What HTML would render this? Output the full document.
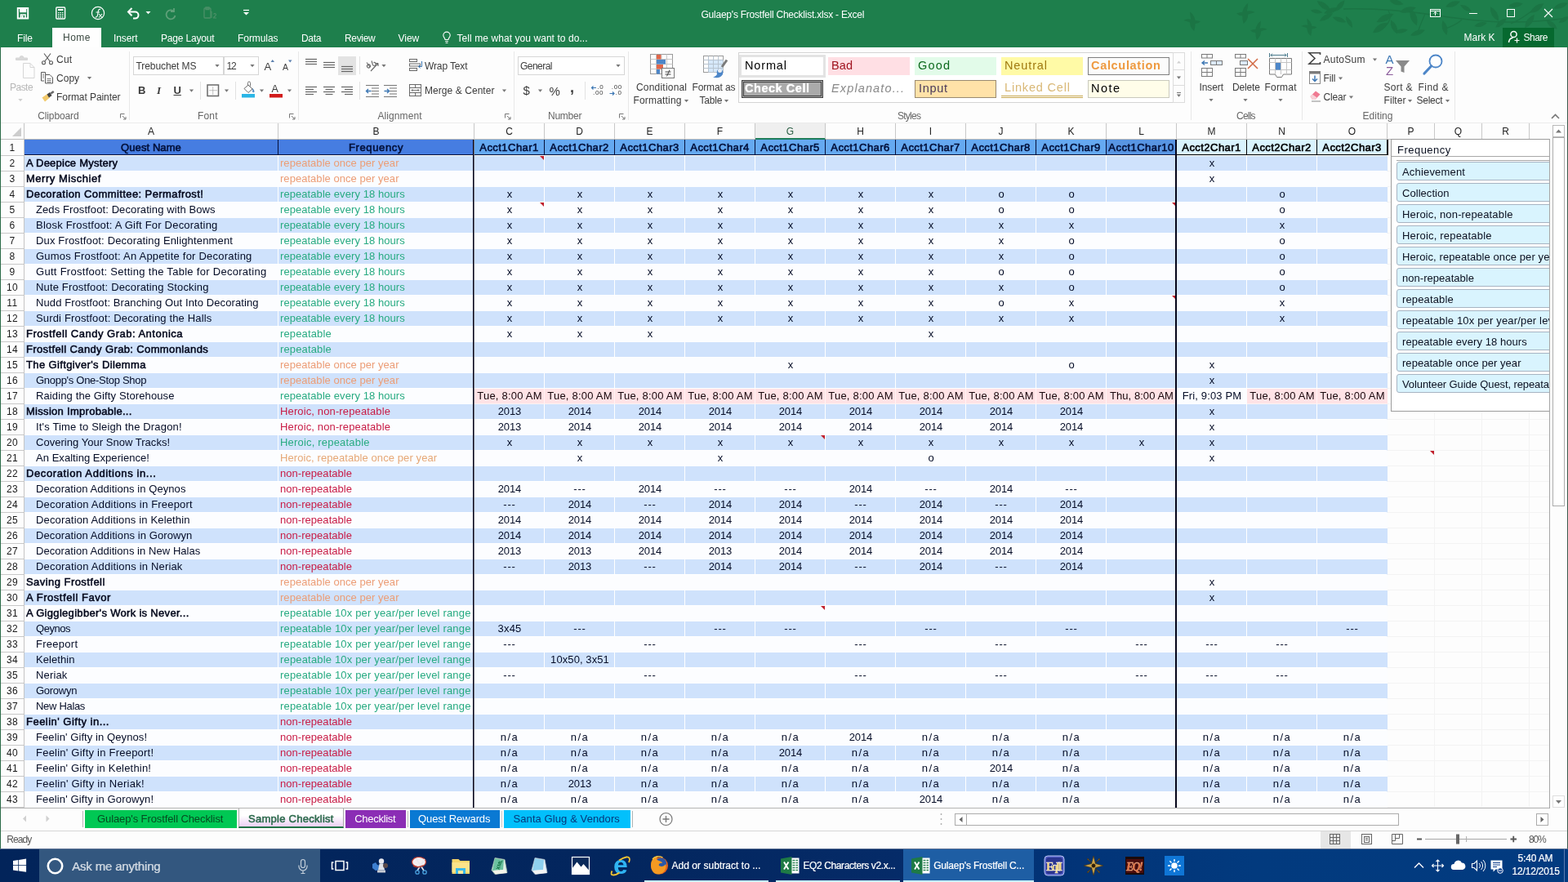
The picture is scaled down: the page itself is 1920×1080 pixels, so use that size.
<!DOCTYPE html><html><head><meta charset="utf-8"><title>Gulaep's Frostfell Checklist.xlsx - Excel</title><style>

*{box-sizing:border-box;margin:0;padding:0}
html,body{width:1920px;height:1080px;overflow:hidden;background:#fff}
body{font-family:"Liberation Sans",sans-serif;font-size:12px;color:#444;position:relative}
.abs,#grid div,#grid span,#grid b{position:absolute}
svg{position:absolute;overflow:visible}
/* ---------- grid ---------- */
#grid{position:absolute;left:0;top:0;width:1920px;height:1080px;font-size:13px;color:#040c26;white-space:nowrap}
#gridbg{position:absolute;left:1px;top:151px;width:1897px;height:839px;background:#fdfdfd;border-bottom:1px solid #b4b4b4}
.gh{left:1699px;width:198px;height:1px;background:#f3f3f3}
.gv{top:171px;width:1px;height:818px;background:#f3f3f3}
.corner{left:1px;top:151px;width:29px;height:20px;border-right:1px solid #c4c4c4;border-bottom:1px solid #bdbdbd;background:#fdfdfd}
.corner i{position:absolute;right:3px;bottom:3px;width:0;height:0;border-left:11px solid transparent;border-bottom:11px solid #cdcdcd}
.ch{top:151px;height:20px;line-height:21px;text-align:center;color:#222;border-right:1px solid #c8c8c8;border-bottom:1px solid #b9b9b9;background:#fdfdfd;font-size:12px}
.ch.sel{background:#efefef;color:#2b5e44;border-bottom:2px solid #1f7d5a}
.rh{left:1px;width:29px;height:20px;line-height:20px;text-align:center;letter-spacing:.4px;color:#1a1a1a;border-right:1px solid #c4c4c4;border-bottom:1px solid #c8c8c8;font-size:12px}
.r{left:0;width:1699px;height:19px;line-height:18px}
.r span,.r b{top:0;height:19px;overflow:hidden;border-right:1px solid #fff;border-bottom:1px solid #fff}
.r.wh span{background:#fcfdff;border-color:#fcfdff}
.r.bl span{background:#cfe2fc}
.r.bl span.lc{border-right-color:#cfe2fc}
.r.wh span.pk.lc{border-right-color:#ffe3e6}
.a{left:30px;width:311px}
.a.b{font-weight:normal;-webkit-text-stroke:.5px #02061a;padding-left:2px;color:#02061a}
.a.i{padding-left:14px}
.f{left:341px;width:240px;padding-left:2px}
.c{width:86px;text-align:center;padding-left:1px}
.o{color:#ec9d76}.t{color:#e6a877}.g{color:#28ab82}.rd{color:#c81c46}
.r.wh span.pk,.pk{background:#ffe3e6;color:#16040a;border-color:#fff3f4}
.r.hd{height:20px}
.hd b{font-weight:normal;-webkit-text-stroke:.6px #03103a;top:0;height:19px;line-height:20px;text-align:center;color:#03103a;border-right:1px solid #06103a;border-bottom:1px solid #06103a;overflow:hidden}
.h1{background:#467de1}
.h2{width:86px;background:#65a9f1}
.h2l{background:#5895e3}
.hd b.h3{width:86px;background:#d9f3fe;color:#000;-webkit-text-stroke-color:#000;border-color:#000}
.hd b.h3.last{width:87px;border-right-width:2px}
.cm{width:0;height:0;border-left:5px solid transparent;border-top:5px solid #c0202c}
.vl{top:171px;width:2px;height:818px;background:#05051a}


#tb{position:absolute;left:0;top:0;width:1920px;height:58px;background:#1e7f4c;color:#fff}
.x{position:absolute;white-space:pre}
#tb .x{color:#fff}
#hometab{position:absolute;left:64px;top:34px;width:60px;height:24px;background:#fefefe}
#share{position:absolute;left:1840px;top:34px;width:63px;height:24px;background:#06692f}
#lb{position:absolute;left:0;top:58px;width:1px;height:982px;background:#2b6b47}
#rbd{position:absolute;left:1919px;top:58px;width:1px;height:982px;background:#3b5a4c}


#rb{position:absolute;left:1px;top:58px;width:1918px;height:93px;background:#fdfdfd;border-bottom:1px solid #ececec}
#rb .x,.rbt{color:#3b3b3b}
.gs{position:absolute;top:63px;width:1px;height:84px;background:#e8e8e8}
.ss{position:absolute;width:1px;height:22px;background:#e2e2e2}
.box{position:absolute;border:1px solid #d6d6d6;background:#fff}
.sty{position:absolute;height:22px;width:100px;font-size:14.5px;line-height:20px;padding-left:4px;white-space:nowrap;overflow:hidden;color:#000}


#sl{position:absolute;left:1703px;top:170px;width:194px;height:334px;border:1px solid #9c9c9c;border-right:0;background:#fff;overflow:hidden;font-size:13px;color:#0a1020;white-space:nowrap}
#sl .hd1{position:absolute;left:7px;top:3px;height:18px;line-height:20px}
#sl .l1{position:absolute;left:0;top:20px;width:195px;height:1px;background:#a8a8a8}
#sl .l2{position:absolute;left:6px;top:25px;width:190px;height:1px;background:#a8a8a8}
#sl .it{position:absolute;left:6px;width:200px;height:23px;line-height:23px;padding-left:6px;border:1px solid #a7b4c2;border-radius:3px;background:#d9f4fe}


#vs{position:absolute;left:1898px;top:151px;width:21px;height:839px;background:#fdfdfd}
.sb{position:absolute;border:1px solid #ababab;background:#fff}
#tabs{position:absolute;left:1px;top:990px;width:1918px;height:27px;background:#fdfdfd}
#st{position:absolute;left:1px;top:1017px;width:1918px;height:23px;background:#fdfdfd;border-top:1px solid #d6d6d6}
.tab{position:absolute;top:992px;height:22px;line-height:21px;font-size:13px;text-align:center;white-space:nowrap}
.tsep{position:absolute;top:993px;width:1px;height:20px;background:#b5b5b5}


#tk{position:absolute;left:0;top:1040px;width:1920px;height:40px;background:linear-gradient(90deg,#02245a 0,#03265e 40%,#052b68 57%,#023377 67%,#023a7e 80%,#023b80 100%);overflow:hidden}
#tk .x{color:#fff;-webkit-text-stroke:.2px #fff}
#tkl{position:absolute;left:0;top:1039px;width:1920px;height:1px;background:#5b6f92}
#srch{position:absolute;left:48px;top:0;width:344px;height:40px;background:#33577f}
#act{position:absolute;left:1106px;top:0;width:160px;height:40px;background:#1e5ea4}
.ul{position:absolute;top:38px;height:2px;background:#c9f1fa}

#w{position:absolute;left:0;top:0;width:1920px;height:1080px;overflow:hidden;will-change:transform}
</style></head><body><div id="w">
<div id="gridbg"></div>
<div id="grid">
<div class="gh" style="top:190px"></div>
<div class="gh" style="top:209px"></div>
<div class="gh" style="top:228px"></div>
<div class="gh" style="top:247px"></div>
<div class="gh" style="top:266px"></div>
<div class="gh" style="top:285px"></div>
<div class="gh" style="top:304px"></div>
<div class="gh" style="top:323px"></div>
<div class="gh" style="top:342px"></div>
<div class="gh" style="top:361px"></div>
<div class="gh" style="top:380px"></div>
<div class="gh" style="top:399px"></div>
<div class="gh" style="top:418px"></div>
<div class="gh" style="top:437px"></div>
<div class="gh" style="top:456px"></div>
<div class="gh" style="top:475px"></div>
<div class="gh" style="top:494px"></div>
<div class="gh" style="top:513px"></div>
<div class="gh" style="top:532px"></div>
<div class="gh" style="top:551px"></div>
<div class="gh" style="top:570px"></div>
<div class="gh" style="top:589px"></div>
<div class="gh" style="top:608px"></div>
<div class="gh" style="top:627px"></div>
<div class="gh" style="top:646px"></div>
<div class="gh" style="top:665px"></div>
<div class="gh" style="top:684px"></div>
<div class="gh" style="top:703px"></div>
<div class="gh" style="top:722px"></div>
<div class="gh" style="top:741px"></div>
<div class="gh" style="top:760px"></div>
<div class="gh" style="top:779px"></div>
<div class="gh" style="top:798px"></div>
<div class="gh" style="top:817px"></div>
<div class="gh" style="top:836px"></div>
<div class="gh" style="top:855px"></div>
<div class="gh" style="top:874px"></div>
<div class="gh" style="top:893px"></div>
<div class="gh" style="top:912px"></div>
<div class="gh" style="top:931px"></div>
<div class="gh" style="top:950px"></div>
<div class="gh" style="top:969px"></div>
<div class="gh" style="top:988px"></div>
<div class="gv" style="left:1756px"></div>
<div class="gv" style="left:1814px"></div>
<div class="gv" style="left:1872px"></div>
<div class="corner"><i></i></div>
<div class="ch" style="left:30px;width:311px">A</div>
<div class="ch" style="left:341px;width:240px">B</div>
<div class="ch" style="left:581px;width:86px">C</div>
<div class="ch" style="left:667px;width:86px">D</div>
<div class="ch" style="left:753px;width:86px">E</div>
<div class="ch" style="left:839px;width:86px">F</div>
<div class="ch sel" style="left:925px;width:86px">G</div>
<div class="ch" style="left:1011px;width:86px">H</div>
<div class="ch" style="left:1097px;width:86px">I</div>
<div class="ch" style="left:1183px;width:86px">J</div>
<div class="ch" style="left:1269px;width:86px">K</div>
<div class="ch" style="left:1355px;width:86px">L</div>
<div class="ch" style="left:1441px;width:86px">M</div>
<div class="ch" style="left:1527px;width:86px">N</div>
<div class="ch" style="left:1613px;width:86px">O</div>
<div class="ch" style="left:1699px;width:58px">P</div>
<div class="ch" style="left:1757px;width:58px">Q</div>
<div class="ch" style="left:1815px;width:58px">R</div>
<div class="ch" style="left:1873px;width:25px;border-right:0"></div>
<div class="rh" style="top:171px">1</div>
<div class="rh" style="top:190px">2</div>
<div class="rh" style="top:209px">3</div>
<div class="rh" style="top:228px">4</div>
<div class="rh" style="top:247px">5</div>
<div class="rh" style="top:266px">6</div>
<div class="rh" style="top:285px">7</div>
<div class="rh" style="top:304px">8</div>
<div class="rh" style="top:323px">9</div>
<div class="rh" style="top:342px">10</div>
<div class="rh" style="top:361px">11</div>
<div class="rh" style="top:380px">12</div>
<div class="rh" style="top:399px">13</div>
<div class="rh" style="top:418px">14</div>
<div class="rh" style="top:437px">15</div>
<div class="rh" style="top:456px">16</div>
<div class="rh" style="top:475px">17</div>
<div class="rh" style="top:494px">18</div>
<div class="rh" style="top:513px">19</div>
<div class="rh" style="top:532px">20</div>
<div class="rh" style="top:551px">21</div>
<div class="rh" style="top:570px">22</div>
<div class="rh" style="top:589px">23</div>
<div class="rh" style="top:608px">24</div>
<div class="rh" style="top:627px">25</div>
<div class="rh" style="top:646px">26</div>
<div class="rh" style="top:665px">27</div>
<div class="rh" style="top:684px">28</div>
<div class="rh" style="top:703px">29</div>
<div class="rh" style="top:722px">30</div>
<div class="rh" style="top:741px">31</div>
<div class="rh" style="top:760px">32</div>
<div class="rh" style="top:779px">33</div>
<div class="rh" style="top:798px">34</div>
<div class="rh" style="top:817px">35</div>
<div class="rh" style="top:836px">36</div>
<div class="rh" style="top:855px">37</div>
<div class="rh" style="top:874px">38</div>
<div class="rh" style="top:893px">39</div>
<div class="rh" style="top:912px">40</div>
<div class="rh" style="top:931px">41</div>
<div class="rh" style="top:950px">42</div>
<div class="rh" style="top:969px">43</div>
<div class="r hd" style="top:171px">
<b class="h1" style="left:30px;width:311px;letter-spacing:0.08px">Quest Name</b><b class="h1" style="left:341px;width:240px;letter-spacing:0.62px">Frequency</b>
<b class="h2" style="left:581px;letter-spacing:0.45px">Acct1Char1</b>
<b class="h2" style="left:667px;letter-spacing:0.45px">Acct1Char2</b>
<b class="h2" style="left:753px;letter-spacing:0.45px">Acct1Char3</b>
<b class="h2" style="left:839px;letter-spacing:0.45px">Acct1Char4</b>
<b class="h2" style="left:925px;letter-spacing:0.45px">Acct1Char5</b>
<b class="h2" style="left:1011px;letter-spacing:0.45px">Acct1Char6</b>
<b class="h2" style="left:1097px;letter-spacing:0.45px">Acct1Char7</b>
<b class="h2" style="left:1183px;letter-spacing:0.45px">Acct1Char8</b>
<b class="h2" style="left:1269px;letter-spacing:0.45px">Acct1Char9</b>
<b class="h2 h2l" style="left:1355px;letter-spacing:0.48px">Acct1Char10</b>
<b class="h3" style="left:1441px;letter-spacing:0.45px">Acct2Char1</b>
<b class="h3" style="left:1527px;letter-spacing:0.45px">Acct2Char2</b>
<b class="h3 last" style="left:1613px;letter-spacing:0.45px">Acct2Char3</b>
</div>
<div class="r bl" style="top:191px">
<span class="a b" style="letter-spacing:0.23px">A Deepice Mystery</span><span class="f o" style="letter-spacing:0.04px">repeatable once per year</span>
<span class="c" style="left:581px"></span>
<span class="c" style="left:667px"></span>
<span class="c" style="left:753px"></span>
<span class="c" style="left:839px"></span>
<span class="c" style="left:925px"></span>
<span class="c" style="left:1011px"></span>
<span class="c" style="left:1097px"></span>
<span class="c" style="left:1183px"></span>
<span class="c" style="left:1269px"></span>
<span class="c" style="left:1355px"></span>
<span class="c" style="left:1441px">x</span>
<span class="c" style="left:1527px"></span>
<span class="c lc" style="left:1613px"></span>
</div>
<div class="r wh" style="top:210px">
<span class="a b" style="letter-spacing:0.53px">Merry Mischief</span><span class="f o" style="letter-spacing:0.04px">repeatable once per year</span>
<span class="c" style="left:581px"></span>
<span class="c" style="left:667px"></span>
<span class="c" style="left:753px"></span>
<span class="c" style="left:839px"></span>
<span class="c" style="left:925px"></span>
<span class="c" style="left:1011px"></span>
<span class="c" style="left:1097px"></span>
<span class="c" style="left:1183px"></span>
<span class="c" style="left:1269px"></span>
<span class="c" style="left:1355px"></span>
<span class="c" style="left:1441px">x</span>
<span class="c" style="left:1527px"></span>
<span class="c lc" style="left:1613px"></span>
</div>
<div class="r bl" style="top:229px">
<span class="a b" style="letter-spacing:0.41px">Decoration Committee: Permafrost!</span><span class="f g" style="letter-spacing:0.07px">repeatable every 18 hours</span>
<span class="c" style="left:581px">x</span>
<span class="c" style="left:667px">x</span>
<span class="c" style="left:753px">x</span>
<span class="c" style="left:839px">x</span>
<span class="c" style="left:925px">x</span>
<span class="c" style="left:1011px">x</span>
<span class="c" style="left:1097px">x</span>
<span class="c" style="left:1183px">o</span>
<span class="c" style="left:1269px">o</span>
<span class="c" style="left:1355px"></span>
<span class="c" style="left:1441px"></span>
<span class="c" style="left:1527px">o</span>
<span class="c lc" style="left:1613px"></span>
</div>
<div class="r wh" style="top:248px">
<span class="a i" style="letter-spacing:0.1px">Zeds Frostfoot: Decorating with Bows</span><span class="f g" style="letter-spacing:0.07px">repeatable every 18 hours</span>
<span class="c" style="left:581px">x</span>
<span class="c" style="left:667px">x</span>
<span class="c" style="left:753px">x</span>
<span class="c" style="left:839px">x</span>
<span class="c" style="left:925px">x</span>
<span class="c" style="left:1011px">x</span>
<span class="c" style="left:1097px">x</span>
<span class="c" style="left:1183px">o</span>
<span class="c" style="left:1269px">o</span>
<span class="c" style="left:1355px"></span>
<span class="c" style="left:1441px"></span>
<span class="c" style="left:1527px">o</span>
<span class="c lc" style="left:1613px"></span>
</div>
<div class="r bl" style="top:267px">
<span class="a i" style="letter-spacing:0.21px">Blosk Frostfoot: A Gift For Decorating</span><span class="f g" style="letter-spacing:0.07px">repeatable every 18 hours</span>
<span class="c" style="left:581px">x</span>
<span class="c" style="left:667px">x</span>
<span class="c" style="left:753px">x</span>
<span class="c" style="left:839px">x</span>
<span class="c" style="left:925px">x</span>
<span class="c" style="left:1011px">x</span>
<span class="c" style="left:1097px">x</span>
<span class="c" style="left:1183px">x</span>
<span class="c" style="left:1269px">x</span>
<span class="c" style="left:1355px"></span>
<span class="c" style="left:1441px"></span>
<span class="c" style="left:1527px">x</span>
<span class="c lc" style="left:1613px"></span>
</div>
<div class="r wh" style="top:286px">
<span class="a i" style="letter-spacing:0.16px">Dux Frostfoot: Decorating Enlightenment</span><span class="f g" style="letter-spacing:0.07px">repeatable every 18 hours</span>
<span class="c" style="left:581px">x</span>
<span class="c" style="left:667px">x</span>
<span class="c" style="left:753px">x</span>
<span class="c" style="left:839px">x</span>
<span class="c" style="left:925px">x</span>
<span class="c" style="left:1011px">x</span>
<span class="c" style="left:1097px">x</span>
<span class="c" style="left:1183px">x</span>
<span class="c" style="left:1269px">o</span>
<span class="c" style="left:1355px"></span>
<span class="c" style="left:1441px"></span>
<span class="c" style="left:1527px">o</span>
<span class="c lc" style="left:1613px"></span>
</div>
<div class="r bl" style="top:305px">
<span class="a i" style="letter-spacing:0.22px">Gumos Frostfoot: An Appetite for Decorating</span><span class="f g" style="letter-spacing:0.07px">repeatable every 18 hours</span>
<span class="c" style="left:581px">x</span>
<span class="c" style="left:667px">x</span>
<span class="c" style="left:753px">x</span>
<span class="c" style="left:839px">x</span>
<span class="c" style="left:925px">x</span>
<span class="c" style="left:1011px">x</span>
<span class="c" style="left:1097px">x</span>
<span class="c" style="left:1183px">x</span>
<span class="c" style="left:1269px">o</span>
<span class="c" style="left:1355px"></span>
<span class="c" style="left:1441px"></span>
<span class="c" style="left:1527px">o</span>
<span class="c lc" style="left:1613px"></span>
</div>
<div class="r wh" style="top:324px">
<span class="a i" style="letter-spacing:0.29px">Gutt Frostfoot: Setting the Table for Decorating</span><span class="f g" style="letter-spacing:0.07px">repeatable every 18 hours</span>
<span class="c" style="left:581px">x</span>
<span class="c" style="left:667px">x</span>
<span class="c" style="left:753px">x</span>
<span class="c" style="left:839px">x</span>
<span class="c" style="left:925px">x</span>
<span class="c" style="left:1011px">x</span>
<span class="c" style="left:1097px">x</span>
<span class="c" style="left:1183px">o</span>
<span class="c" style="left:1269px">o</span>
<span class="c" style="left:1355px"></span>
<span class="c" style="left:1441px"></span>
<span class="c" style="left:1527px">o</span>
<span class="c lc" style="left:1613px"></span>
</div>
<div class="r bl" style="top:343px">
<span class="a i" style="letter-spacing:0.16px">Nute Frostfoot: Decorating Stocking</span><span class="f g" style="letter-spacing:0.07px">repeatable every 18 hours</span>
<span class="c" style="left:581px">x</span>
<span class="c" style="left:667px">x</span>
<span class="c" style="left:753px">x</span>
<span class="c" style="left:839px">x</span>
<span class="c" style="left:925px">x</span>
<span class="c" style="left:1011px">x</span>
<span class="c" style="left:1097px">x</span>
<span class="c" style="left:1183px">x</span>
<span class="c" style="left:1269px">o</span>
<span class="c" style="left:1355px"></span>
<span class="c" style="left:1441px"></span>
<span class="c" style="left:1527px">o</span>
<span class="c lc" style="left:1613px"></span>
</div>
<div class="r wh" style="top:362px">
<span class="a i" style="letter-spacing:0.1px">Nudd Frostfoot: Branching Out Into Decorating</span><span class="f g" style="letter-spacing:0.07px">repeatable every 18 hours</span>
<span class="c" style="left:581px">x</span>
<span class="c" style="left:667px">x</span>
<span class="c" style="left:753px">x</span>
<span class="c" style="left:839px">x</span>
<span class="c" style="left:925px">x</span>
<span class="c" style="left:1011px">x</span>
<span class="c" style="left:1097px">x</span>
<span class="c" style="left:1183px">o</span>
<span class="c" style="left:1269px">x</span>
<span class="c" style="left:1355px"></span>
<span class="c" style="left:1441px"></span>
<span class="c" style="left:1527px">x</span>
<span class="c lc" style="left:1613px"></span>
</div>
<div class="r bl" style="top:381px">
<span class="a i" style="letter-spacing:0.16px">Surdi Frostfoot: Decorating the Halls</span><span class="f g" style="letter-spacing:0.07px">repeatable every 18 hours</span>
<span class="c" style="left:581px">x</span>
<span class="c" style="left:667px">x</span>
<span class="c" style="left:753px">x</span>
<span class="c" style="left:839px">x</span>
<span class="c" style="left:925px">x</span>
<span class="c" style="left:1011px">x</span>
<span class="c" style="left:1097px">x</span>
<span class="c" style="left:1183px">x</span>
<span class="c" style="left:1269px">x</span>
<span class="c" style="left:1355px"></span>
<span class="c" style="left:1441px"></span>
<span class="c" style="left:1527px">x</span>
<span class="c lc" style="left:1613px"></span>
</div>
<div class="r wh" style="top:400px">
<span class="a b" style="letter-spacing:0.5px">Frostfell Candy Grab: Antonica</span><span class="f g" style="letter-spacing:0.14px">repeatable</span>
<span class="c" style="left:581px">x</span>
<span class="c" style="left:667px">x</span>
<span class="c" style="left:753px">x</span>
<span class="c" style="left:839px"></span>
<span class="c" style="left:925px"></span>
<span class="c" style="left:1011px"></span>
<span class="c" style="left:1097px">x</span>
<span class="c" style="left:1183px"></span>
<span class="c" style="left:1269px"></span>
<span class="c" style="left:1355px"></span>
<span class="c" style="left:1441px"></span>
<span class="c" style="left:1527px"></span>
<span class="c lc" style="left:1613px"></span>
</div>
<div class="r bl" style="top:419px">
<span class="a b" style="letter-spacing:0.37px">Frostfell Candy Grab: Commonlands</span><span class="f g" style="letter-spacing:0.14px">repeatable</span>
<span class="c" style="left:581px"></span>
<span class="c" style="left:667px"></span>
<span class="c" style="left:753px"></span>
<span class="c" style="left:839px"></span>
<span class="c" style="left:925px"></span>
<span class="c" style="left:1011px"></span>
<span class="c" style="left:1097px"></span>
<span class="c" style="left:1183px"></span>
<span class="c" style="left:1269px"></span>
<span class="c" style="left:1355px"></span>
<span class="c" style="left:1441px"></span>
<span class="c" style="left:1527px"></span>
<span class="c lc" style="left:1613px"></span>
</div>
<div class="r wh" style="top:438px">
<span class="a b" style="letter-spacing:0.37px">The Giftgiver's Dilemma</span><span class="f o" style="letter-spacing:0.04px">repeatable once per year</span>
<span class="c" style="left:581px"></span>
<span class="c" style="left:667px"></span>
<span class="c" style="left:753px"></span>
<span class="c" style="left:839px"></span>
<span class="c" style="left:925px">x</span>
<span class="c" style="left:1011px"></span>
<span class="c" style="left:1097px"></span>
<span class="c" style="left:1183px"></span>
<span class="c" style="left:1269px">o</span>
<span class="c" style="left:1355px"></span>
<span class="c" style="left:1441px">x</span>
<span class="c" style="left:1527px"></span>
<span class="c lc" style="left:1613px"></span>
</div>
<div class="r bl" style="top:457px">
<span class="a i" style="letter-spacing:-0.29px">Gnopp's One-Stop Shop</span><span class="f o" style="letter-spacing:0.04px">repeatable once per year</span>
<span class="c" style="left:581px"></span>
<span class="c" style="left:667px"></span>
<span class="c" style="left:753px"></span>
<span class="c" style="left:839px"></span>
<span class="c" style="left:925px"></span>
<span class="c" style="left:1011px"></span>
<span class="c" style="left:1097px"></span>
<span class="c" style="left:1183px"></span>
<span class="c" style="left:1269px"></span>
<span class="c" style="left:1355px"></span>
<span class="c" style="left:1441px">x</span>
<span class="c" style="left:1527px"></span>
<span class="c lc" style="left:1613px"></span>
</div>
<div class="r wh" style="top:476px">
<span class="a i" style="letter-spacing:0.12px">Raiding the Gifty Storehouse</span><span class="f g" style="letter-spacing:0.07px">repeatable every 18 hours</span>
<span class="c pk" style="left:581px;letter-spacing:0.21px">Tue, 8:00 AM</span>
<span class="c pk" style="left:667px;letter-spacing:0.21px">Tue, 8:00 AM</span>
<span class="c pk" style="left:753px;letter-spacing:0.21px">Tue, 8:00 AM</span>
<span class="c pk" style="left:839px;letter-spacing:0.21px">Tue, 8:00 AM</span>
<span class="c pk" style="left:925px;letter-spacing:0.21px">Tue, 8:00 AM</span>
<span class="c pk" style="left:1011px;letter-spacing:0.21px">Tue, 8:00 AM</span>
<span class="c pk" style="left:1097px;letter-spacing:0.21px">Tue, 8:00 AM</span>
<span class="c pk" style="left:1183px;letter-spacing:0.21px">Tue, 8:00 AM</span>
<span class="c pk" style="left:1269px;letter-spacing:0.21px">Tue, 8:00 AM</span>
<span class="c pk" style="left:1355px;letter-spacing:0.06px">Thu, 8:00 AM</span>
<span class="c" style="left:1441px;letter-spacing:0.16px">Fri, 9:03 PM</span>
<span class="c pk" style="left:1527px;letter-spacing:0.21px">Tue, 8:00 AM</span>
<span class="c pk lc" style="left:1613px;letter-spacing:0.21px">Tue, 8:00 AM</span>
</div>
<div class="r bl" style="top:495px">
<span class="a b" style="letter-spacing:0.29px">Mission Improbable...</span><span class="f rd" style="letter-spacing:0.13px">Heroic, non-repeatable</span>
<span class="c" style="left:581px;letter-spacing:-0.11px">2013</span>
<span class="c" style="left:667px;letter-spacing:-0.11px">2014</span>
<span class="c" style="left:753px;letter-spacing:-0.11px">2014</span>
<span class="c" style="left:839px;letter-spacing:-0.11px">2014</span>
<span class="c" style="left:925px;letter-spacing:-0.11px">2014</span>
<span class="c" style="left:1011px;letter-spacing:-0.11px">2014</span>
<span class="c" style="left:1097px;letter-spacing:-0.11px">2014</span>
<span class="c" style="left:1183px;letter-spacing:-0.11px">2014</span>
<span class="c" style="left:1269px;letter-spacing:-0.11px">2014</span>
<span class="c" style="left:1355px"></span>
<span class="c" style="left:1441px">x</span>
<span class="c" style="left:1527px"></span>
<span class="c lc" style="left:1613px"></span>
</div>
<div class="r wh" style="top:514px">
<span class="a i" style="letter-spacing:0.16px">It's Time to Sleigh the Dragon!</span><span class="f rd" style="letter-spacing:0.13px">Heroic, non-repeatable</span>
<span class="c" style="left:581px;letter-spacing:-0.11px">2013</span>
<span class="c" style="left:667px;letter-spacing:-0.11px">2014</span>
<span class="c" style="left:753px;letter-spacing:-0.11px">2014</span>
<span class="c" style="left:839px;letter-spacing:-0.11px">2014</span>
<span class="c" style="left:925px;letter-spacing:-0.11px">2014</span>
<span class="c" style="left:1011px;letter-spacing:-0.11px">2014</span>
<span class="c" style="left:1097px;letter-spacing:-0.11px">2014</span>
<span class="c" style="left:1183px;letter-spacing:-0.11px">2014</span>
<span class="c" style="left:1269px;letter-spacing:-0.11px">2014</span>
<span class="c" style="left:1355px"></span>
<span class="c" style="left:1441px">x</span>
<span class="c" style="left:1527px"></span>
<span class="c lc" style="left:1613px"></span>
</div>
<div class="r bl" style="top:533px">
<span class="a i" style="letter-spacing:0.03px">Covering Your Snow Tracks!</span><span class="f g" style="letter-spacing:0.19px">Heroic, repeatable</span>
<span class="c" style="left:581px">x</span>
<span class="c" style="left:667px">x</span>
<span class="c" style="left:753px">x</span>
<span class="c" style="left:839px">x</span>
<span class="c" style="left:925px">x</span>
<span class="c" style="left:1011px">x</span>
<span class="c" style="left:1097px">x</span>
<span class="c" style="left:1183px">x</span>
<span class="c" style="left:1269px">x</span>
<span class="c" style="left:1355px">x</span>
<span class="c" style="left:1441px">x</span>
<span class="c" style="left:1527px"></span>
<span class="c lc" style="left:1613px"></span>
</div>
<div class="r wh" style="top:552px">
<span class="a i" style="letter-spacing:0.04px">An Exalting Experience!</span><span class="f t" style="letter-spacing:0.09px">Heroic, repeatable once per year</span>
<span class="c" style="left:581px"></span>
<span class="c" style="left:667px">x</span>
<span class="c" style="left:753px"></span>
<span class="c" style="left:839px">x</span>
<span class="c" style="left:925px"></span>
<span class="c" style="left:1011px"></span>
<span class="c" style="left:1097px">o</span>
<span class="c" style="left:1183px"></span>
<span class="c" style="left:1269px"></span>
<span class="c" style="left:1355px"></span>
<span class="c" style="left:1441px">x</span>
<span class="c" style="left:1527px"></span>
<span class="c lc" style="left:1613px"></span>
</div>
<div class="r bl" style="top:571px">
<span class="a b" style="letter-spacing:0.6px">Decoration Additions in...</span><span class="f rd" style="letter-spacing:0.04px">non-repeatable</span>
<span class="c" style="left:581px"></span>
<span class="c" style="left:667px"></span>
<span class="c" style="left:753px"></span>
<span class="c" style="left:839px"></span>
<span class="c" style="left:925px"></span>
<span class="c" style="left:1011px"></span>
<span class="c" style="left:1097px"></span>
<span class="c" style="left:1183px"></span>
<span class="c" style="left:1269px"></span>
<span class="c" style="left:1355px"></span>
<span class="c" style="left:1441px"></span>
<span class="c" style="left:1527px"></span>
<span class="c lc" style="left:1613px"></span>
</div>
<div class="r wh" style="top:590px">
<span class="a i" style="letter-spacing:0.07px">Decoration Additions in Qeynos</span><span class="f rd" style="letter-spacing:0.04px">non-repeatable</span>
<span class="c" style="left:581px;letter-spacing:-0.11px">2014</span>
<span class="c" style="left:667px;letter-spacing:0.85px">---</span>
<span class="c" style="left:753px;letter-spacing:-0.11px">2014</span>
<span class="c" style="left:839px;letter-spacing:0.85px">---</span>
<span class="c" style="left:925px;letter-spacing:0.85px">---</span>
<span class="c" style="left:1011px;letter-spacing:-0.11px">2014</span>
<span class="c" style="left:1097px;letter-spacing:0.85px">---</span>
<span class="c" style="left:1183px;letter-spacing:-0.11px">2014</span>
<span class="c" style="left:1269px;letter-spacing:0.85px">---</span>
<span class="c" style="left:1355px"></span>
<span class="c" style="left:1441px"></span>
<span class="c" style="left:1527px"></span>
<span class="c lc" style="left:1613px"></span>
</div>
<div class="r bl" style="top:609px">
<span class="a i" style="letter-spacing:0.19px">Decoration Additions in Freeport</span><span class="f rd" style="letter-spacing:0.04px">non-repeatable</span>
<span class="c" style="left:581px;letter-spacing:0.85px">---</span>
<span class="c" style="left:667px;letter-spacing:-0.11px">2014</span>
<span class="c" style="left:753px;letter-spacing:0.85px">---</span>
<span class="c" style="left:839px;letter-spacing:-0.11px">2014</span>
<span class="c" style="left:925px;letter-spacing:-0.11px">2014</span>
<span class="c" style="left:1011px;letter-spacing:0.85px">---</span>
<span class="c" style="left:1097px;letter-spacing:-0.11px">2014</span>
<span class="c" style="left:1183px;letter-spacing:0.85px">---</span>
<span class="c" style="left:1269px;letter-spacing:-0.11px">2014</span>
<span class="c" style="left:1355px"></span>
<span class="c" style="left:1441px"></span>
<span class="c" style="left:1527px"></span>
<span class="c lc" style="left:1613px"></span>
</div>
<div class="r wh" style="top:628px">
<span class="a i" style="letter-spacing:0.16px">Decoration Additions in Kelethin</span><span class="f rd" style="letter-spacing:0.04px">non-repeatable</span>
<span class="c" style="left:581px;letter-spacing:-0.11px">2014</span>
<span class="c" style="left:667px;letter-spacing:-0.11px">2014</span>
<span class="c" style="left:753px;letter-spacing:-0.11px">2014</span>
<span class="c" style="left:839px;letter-spacing:-0.11px">2014</span>
<span class="c" style="left:925px;letter-spacing:-0.11px">2014</span>
<span class="c" style="left:1011px;letter-spacing:-0.11px">2014</span>
<span class="c" style="left:1097px;letter-spacing:-0.11px">2014</span>
<span class="c" style="left:1183px;letter-spacing:-0.11px">2014</span>
<span class="c" style="left:1269px;letter-spacing:-0.11px">2014</span>
<span class="c" style="left:1355px"></span>
<span class="c" style="left:1441px"></span>
<span class="c" style="left:1527px"></span>
<span class="c lc" style="left:1613px"></span>
</div>
<div class="r bl" style="top:647px">
<span class="a i" style="letter-spacing:0.09px">Decoration Additions in Gorowyn</span><span class="f rd" style="letter-spacing:0.04px">non-repeatable</span>
<span class="c" style="left:581px;letter-spacing:-0.11px">2014</span>
<span class="c" style="left:667px;letter-spacing:-0.11px">2014</span>
<span class="c" style="left:753px;letter-spacing:-0.11px">2014</span>
<span class="c" style="left:839px;letter-spacing:-0.11px">2014</span>
<span class="c" style="left:925px;letter-spacing:-0.11px">2014</span>
<span class="c" style="left:1011px;letter-spacing:-0.11px">2014</span>
<span class="c" style="left:1097px;letter-spacing:-0.11px">2014</span>
<span class="c" style="left:1183px;letter-spacing:-0.11px">2014</span>
<span class="c" style="left:1269px;letter-spacing:-0.11px">2014</span>
<span class="c" style="left:1355px"></span>
<span class="c" style="left:1441px"></span>
<span class="c" style="left:1527px"></span>
<span class="c lc" style="left:1613px"></span>
</div>
<div class="r wh" style="top:666px">
<span class="a i" style="letter-spacing:0.06px">Decoration Additions in New Halas</span><span class="f rd" style="letter-spacing:0.04px">non-repeatable</span>
<span class="c" style="left:581px;letter-spacing:-0.11px">2013</span>
<span class="c" style="left:667px;letter-spacing:-0.11px">2013</span>
<span class="c" style="left:753px;letter-spacing:-0.11px">2014</span>
<span class="c" style="left:839px;letter-spacing:-0.11px">2013</span>
<span class="c" style="left:925px;letter-spacing:-0.11px">2014</span>
<span class="c" style="left:1011px;letter-spacing:-0.11px">2014</span>
<span class="c" style="left:1097px;letter-spacing:-0.11px">2014</span>
<span class="c" style="left:1183px;letter-spacing:-0.11px">2014</span>
<span class="c" style="left:1269px;letter-spacing:-0.11px">2014</span>
<span class="c" style="left:1355px"></span>
<span class="c" style="left:1441px"></span>
<span class="c" style="left:1527px"></span>
<span class="c lc" style="left:1613px"></span>
</div>
<div class="r bl" style="top:685px">
<span class="a i" style="letter-spacing:0.18px">Decoration Additions in Neriak</span><span class="f rd" style="letter-spacing:0.04px">non-repeatable</span>
<span class="c" style="left:581px;letter-spacing:0.85px">---</span>
<span class="c" style="left:667px;letter-spacing:-0.11px">2013</span>
<span class="c" style="left:753px;letter-spacing:0.85px">---</span>
<span class="c" style="left:839px;letter-spacing:-0.11px">2014</span>
<span class="c" style="left:925px;letter-spacing:-0.11px">2014</span>
<span class="c" style="left:1011px;letter-spacing:0.85px">---</span>
<span class="c" style="left:1097px;letter-spacing:-0.11px">2014</span>
<span class="c" style="left:1183px;letter-spacing:0.85px">---</span>
<span class="c" style="left:1269px;letter-spacing:-0.11px">2014</span>
<span class="c" style="left:1355px"></span>
<span class="c" style="left:1441px"></span>
<span class="c" style="left:1527px"></span>
<span class="c lc" style="left:1613px"></span>
</div>
<div class="r wh" style="top:704px">
<span class="a b" style="letter-spacing:0.45px">Saving Frostfell</span><span class="f o" style="letter-spacing:0.04px">repeatable once per year</span>
<span class="c" style="left:581px"></span>
<span class="c" style="left:667px"></span>
<span class="c" style="left:753px"></span>
<span class="c" style="left:839px"></span>
<span class="c" style="left:925px"></span>
<span class="c" style="left:1011px"></span>
<span class="c" style="left:1097px"></span>
<span class="c" style="left:1183px"></span>
<span class="c" style="left:1269px"></span>
<span class="c" style="left:1355px"></span>
<span class="c" style="left:1441px">x</span>
<span class="c" style="left:1527px"></span>
<span class="c lc" style="left:1613px"></span>
</div>
<div class="r bl" style="top:723px">
<span class="a b" style="letter-spacing:0.55px">A Frostfell Favor</span><span class="f o" style="letter-spacing:0.04px">repeatable once per year</span>
<span class="c" style="left:581px"></span>
<span class="c" style="left:667px"></span>
<span class="c" style="left:753px"></span>
<span class="c" style="left:839px"></span>
<span class="c" style="left:925px"></span>
<span class="c" style="left:1011px"></span>
<span class="c" style="left:1097px"></span>
<span class="c" style="left:1183px"></span>
<span class="c" style="left:1269px"></span>
<span class="c" style="left:1355px"></span>
<span class="c" style="left:1441px">x</span>
<span class="c" style="left:1527px"></span>
<span class="c lc" style="left:1613px"></span>
</div>
<div class="r wh" style="top:742px">
<span class="a b" style="letter-spacing:0.31px">A Gigglegibber's Work is Never...</span><span class="f g" style="letter-spacing:0.17px">repeatable 10x per year/per level range</span>
<span class="c" style="left:581px"></span>
<span class="c" style="left:667px"></span>
<span class="c" style="left:753px"></span>
<span class="c" style="left:839px"></span>
<span class="c" style="left:925px"></span>
<span class="c" style="left:1011px"></span>
<span class="c" style="left:1097px"></span>
<span class="c" style="left:1183px"></span>
<span class="c" style="left:1269px"></span>
<span class="c" style="left:1355px"></span>
<span class="c" style="left:1441px"></span>
<span class="c" style="left:1527px"></span>
<span class="c lc" style="left:1613px"></span>
</div>
<div class="r bl" style="top:761px">
<span class="a i" style="letter-spacing:-0.48px">Qeynos</span><span class="f g" style="letter-spacing:0.17px">repeatable 10x per year/per level range</span>
<span class="c" style="left:581px;letter-spacing:0.17px">3x45</span>
<span class="c" style="left:667px;letter-spacing:0.85px">---</span>
<span class="c" style="left:753px"></span>
<span class="c" style="left:839px;letter-spacing:0.85px">---</span>
<span class="c" style="left:925px;letter-spacing:0.85px">---</span>
<span class="c" style="left:1011px"></span>
<span class="c" style="left:1097px;letter-spacing:0.85px">---</span>
<span class="c" style="left:1183px"></span>
<span class="c" style="left:1269px;letter-spacing:0.85px">---</span>
<span class="c" style="left:1355px"></span>
<span class="c" style="left:1441px"></span>
<span class="c" style="left:1527px"></span>
<span class="c lc" style="left:1613px;letter-spacing:0.85px">---</span>
</div>
<div class="r wh" style="top:780px">
<span class="a i" style="letter-spacing:0.27px">Freeport</span><span class="f g" style="letter-spacing:0.17px">repeatable 10x per year/per level range</span>
<span class="c" style="left:581px;letter-spacing:0.85px">---</span>
<span class="c" style="left:667px"></span>
<span class="c" style="left:753px;letter-spacing:0.85px">---</span>
<span class="c" style="left:839px"></span>
<span class="c" style="left:925px"></span>
<span class="c" style="left:1011px;letter-spacing:0.85px">---</span>
<span class="c" style="left:1097px"></span>
<span class="c" style="left:1183px;letter-spacing:0.85px">---</span>
<span class="c" style="left:1269px"></span>
<span class="c" style="left:1355px;letter-spacing:0.85px">---</span>
<span class="c" style="left:1441px;letter-spacing:0.85px">---</span>
<span class="c" style="left:1527px;letter-spacing:0.85px">---</span>
<span class="c lc" style="left:1613px"></span>
</div>
<div class="r bl" style="top:799px">
<span class="a i" style="letter-spacing:0.06px">Kelethin</span><span class="f g" style="letter-spacing:0.17px">repeatable 10x per year/per level range</span>
<span class="c" style="left:581px"></span>
<span class="c" style="left:667px;letter-spacing:0.09px">10x50, 3x51</span>
<span class="c" style="left:753px"></span>
<span class="c" style="left:839px"></span>
<span class="c" style="left:925px"></span>
<span class="c" style="left:1011px"></span>
<span class="c" style="left:1097px"></span>
<span class="c" style="left:1183px"></span>
<span class="c" style="left:1269px"></span>
<span class="c" style="left:1355px"></span>
<span class="c" style="left:1441px"></span>
<span class="c" style="left:1527px"></span>
<span class="c lc" style="left:1613px"></span>
</div>
<div class="r wh" style="top:818px">
<span class="a i" style="letter-spacing:0.16px">Neriak</span><span class="f g" style="letter-spacing:0.17px">repeatable 10x per year/per level range</span>
<span class="c" style="left:581px;letter-spacing:0.85px">---</span>
<span class="c" style="left:667px"></span>
<span class="c" style="left:753px;letter-spacing:0.85px">---</span>
<span class="c" style="left:839px"></span>
<span class="c" style="left:925px"></span>
<span class="c" style="left:1011px;letter-spacing:0.85px">---</span>
<span class="c" style="left:1097px"></span>
<span class="c" style="left:1183px;letter-spacing:0.85px">---</span>
<span class="c" style="left:1269px"></span>
<span class="c" style="left:1355px;letter-spacing:0.85px">---</span>
<span class="c" style="left:1441px;letter-spacing:0.85px">---</span>
<span class="c" style="left:1527px;letter-spacing:0.85px">---</span>
<span class="c lc" style="left:1613px"></span>
</div>
<div class="r bl" style="top:837px">
<span class="a i" style="letter-spacing:-0.27px">Gorowyn</span><span class="f g" style="letter-spacing:0.17px">repeatable 10x per year/per level range</span>
<span class="c" style="left:581px"></span>
<span class="c" style="left:667px"></span>
<span class="c" style="left:753px"></span>
<span class="c" style="left:839px"></span>
<span class="c" style="left:925px"></span>
<span class="c" style="left:1011px"></span>
<span class="c" style="left:1097px"></span>
<span class="c" style="left:1183px"></span>
<span class="c" style="left:1269px"></span>
<span class="c" style="left:1355px"></span>
<span class="c" style="left:1441px"></span>
<span class="c" style="left:1527px"></span>
<span class="c lc" style="left:1613px"></span>
</div>
<div class="r wh" style="top:856px">
<span class="a i" style="letter-spacing:-0.31px">New Halas</span><span class="f g" style="letter-spacing:0.17px">repeatable 10x per year/per level range</span>
<span class="c" style="left:581px"></span>
<span class="c" style="left:667px"></span>
<span class="c" style="left:753px"></span>
<span class="c" style="left:839px"></span>
<span class="c" style="left:925px"></span>
<span class="c" style="left:1011px"></span>
<span class="c" style="left:1097px"></span>
<span class="c" style="left:1183px"></span>
<span class="c" style="left:1269px"></span>
<span class="c" style="left:1355px"></span>
<span class="c" style="left:1441px"></span>
<span class="c" style="left:1527px"></span>
<span class="c lc" style="left:1613px"></span>
</div>
<div class="r bl" style="top:875px">
<span class="a b" style="letter-spacing:0.48px">Feelin' Gifty in...</span><span class="f rd" style="letter-spacing:0.04px">non-repeatable</span>
<span class="c" style="left:581px"></span>
<span class="c" style="left:667px"></span>
<span class="c" style="left:753px"></span>
<span class="c" style="left:839px"></span>
<span class="c" style="left:925px"></span>
<span class="c" style="left:1011px"></span>
<span class="c" style="left:1097px"></span>
<span class="c" style="left:1183px"></span>
<span class="c" style="left:1269px"></span>
<span class="c" style="left:1355px"></span>
<span class="c" style="left:1441px"></span>
<span class="c" style="left:1527px"></span>
<span class="c lc" style="left:1613px"></span>
</div>
<div class="r wh" style="top:894px">
<span class="a i" style="letter-spacing:0.09px">Feelin' Gifty in Qeynos!</span><span class="f rd" style="letter-spacing:0.04px">non-repeatable</span>
<span class="c" style="left:581px;letter-spacing:1.5px">n/a</span>
<span class="c" style="left:667px;letter-spacing:1.5px">n/a</span>
<span class="c" style="left:753px;letter-spacing:1.5px">n/a</span>
<span class="c" style="left:839px;letter-spacing:1.5px">n/a</span>
<span class="c" style="left:925px;letter-spacing:1.5px">n/a</span>
<span class="c" style="left:1011px;letter-spacing:-0.11px">2014</span>
<span class="c" style="left:1097px;letter-spacing:1.5px">n/a</span>
<span class="c" style="left:1183px;letter-spacing:1.5px">n/a</span>
<span class="c" style="left:1269px;letter-spacing:1.5px">n/a</span>
<span class="c" style="left:1355px"></span>
<span class="c" style="left:1441px;letter-spacing:1.5px">n/a</span>
<span class="c" style="left:1527px;letter-spacing:1.5px">n/a</span>
<span class="c lc" style="left:1613px;letter-spacing:1.5px">n/a</span>
</div>
<div class="r bl" style="top:913px">
<span class="a i" style="letter-spacing:0.23px">Feelin' Gifty in Freeport!</span><span class="f rd" style="letter-spacing:0.04px">non-repeatable</span>
<span class="c" style="left:581px;letter-spacing:1.5px">n/a</span>
<span class="c" style="left:667px;letter-spacing:1.5px">n/a</span>
<span class="c" style="left:753px;letter-spacing:1.5px">n/a</span>
<span class="c" style="left:839px;letter-spacing:1.5px">n/a</span>
<span class="c" style="left:925px;letter-spacing:-0.11px">2014</span>
<span class="c" style="left:1011px;letter-spacing:1.5px">n/a</span>
<span class="c" style="left:1097px;letter-spacing:1.5px">n/a</span>
<span class="c" style="left:1183px;letter-spacing:1.5px">n/a</span>
<span class="c" style="left:1269px;letter-spacing:1.5px">n/a</span>
<span class="c" style="left:1355px"></span>
<span class="c" style="left:1441px;letter-spacing:1.5px">n/a</span>
<span class="c" style="left:1527px;letter-spacing:1.5px">n/a</span>
<span class="c lc" style="left:1613px;letter-spacing:1.5px">n/a</span>
</div>
<div class="r wh" style="top:932px">
<span class="a i" style="letter-spacing:0.19px">Feelin' Gifty in Kelethin!</span><span class="f rd" style="letter-spacing:0.04px">non-repeatable</span>
<span class="c" style="left:581px;letter-spacing:1.5px">n/a</span>
<span class="c" style="left:667px;letter-spacing:1.5px">n/a</span>
<span class="c" style="left:753px;letter-spacing:1.5px">n/a</span>
<span class="c" style="left:839px;letter-spacing:1.5px">n/a</span>
<span class="c" style="left:925px;letter-spacing:1.5px">n/a</span>
<span class="c" style="left:1011px;letter-spacing:1.5px">n/a</span>
<span class="c" style="left:1097px;letter-spacing:1.5px">n/a</span>
<span class="c" style="left:1183px;letter-spacing:-0.11px">2014</span>
<span class="c" style="left:1269px;letter-spacing:1.5px">n/a</span>
<span class="c" style="left:1355px"></span>
<span class="c" style="left:1441px;letter-spacing:1.5px">n/a</span>
<span class="c" style="left:1527px;letter-spacing:1.5px">n/a</span>
<span class="c lc" style="left:1613px;letter-spacing:1.5px">n/a</span>
</div>
<div class="r bl" style="top:951px">
<span class="a i" style="letter-spacing:0.25px">Feelin' Gifty in Neriak!</span><span class="f rd" style="letter-spacing:0.04px">non-repeatable</span>
<span class="c" style="left:581px;letter-spacing:1.5px">n/a</span>
<span class="c" style="left:667px;letter-spacing:-0.11px">2013</span>
<span class="c" style="left:753px;letter-spacing:1.5px">n/a</span>
<span class="c" style="left:839px;letter-spacing:1.5px">n/a</span>
<span class="c" style="left:925px;letter-spacing:1.5px">n/a</span>
<span class="c" style="left:1011px;letter-spacing:1.5px">n/a</span>
<span class="c" style="left:1097px;letter-spacing:1.5px">n/a</span>
<span class="c" style="left:1183px;letter-spacing:1.5px">n/a</span>
<span class="c" style="left:1269px;letter-spacing:1.5px">n/a</span>
<span class="c" style="left:1355px"></span>
<span class="c" style="left:1441px;letter-spacing:1.5px">n/a</span>
<span class="c" style="left:1527px;letter-spacing:1.5px">n/a</span>
<span class="c lc" style="left:1613px;letter-spacing:1.5px">n/a</span>
</div>
<div class="r wh" style="top:970px">
<span class="a i" style="letter-spacing:0.12px">Feelin' Gifty in Gorowyn!</span><span class="f rd" style="letter-spacing:0.04px">non-repeatable</span>
<span class="c" style="left:581px;letter-spacing:1.5px">n/a</span>
<span class="c" style="left:667px;letter-spacing:1.5px">n/a</span>
<span class="c" style="left:753px;letter-spacing:1.5px">n/a</span>
<span class="c" style="left:839px;letter-spacing:1.5px">n/a</span>
<span class="c" style="left:925px;letter-spacing:1.5px">n/a</span>
<span class="c" style="left:1011px;letter-spacing:1.5px">n/a</span>
<span class="c" style="left:1097px;letter-spacing:-0.11px">2014</span>
<span class="c" style="left:1183px;letter-spacing:1.5px">n/a</span>
<span class="c" style="left:1269px;letter-spacing:1.5px">n/a</span>
<span class="c" style="left:1355px"></span>
<span class="c" style="left:1441px;letter-spacing:1.5px">n/a</span>
<span class="c" style="left:1527px;letter-spacing:1.5px">n/a</span>
<span class="c lc" style="left:1613px;letter-spacing:1.5px">n/a</span>
</div>
<div class="cm" style="left:661px;top:191px"></div>
<div class="cm" style="left:661px;top:248px"></div>
<div class="cm" style="left:1435px;top:248px"></div>
<div class="cm" style="left:1435px;top:362px"></div>
<div class="cm" style="left:1005px;top:533px"></div>
<div class="cm" style="left:1005px;top:742px"></div>
<div class="cm" style="left:1751px;top:552px"></div>
<div class="vl" style="left:579px;width:1px"></div><div class="vl" style="left:580px;width:1px;background:#6e6e78"></div><div class="vl" style="left:1439px"></div>
</div>
<div id="sl">
<div class="hd1" style="letter-spacing:0.48px">Frequency</div><div class="l1"></div><div class="l2"></div>
<div class="it" style="top:27px;letter-spacing:0.18px">Achievement</div>
<div class="it" style="top:53px;letter-spacing:0.05px">Collection</div>
<div class="it" style="top:79px;letter-spacing:0.15px">Heroic, non-repeatable</div>
<div class="it" style="top:105px;letter-spacing:0.19px">Heroic, repeatable</div>
<div class="it" style="top:131px;letter-spacing:0.09px">Heroic, repeatable once per year</div>
<div class="it" style="top:157px;letter-spacing:0.04px">non-repeatable</div>
<div class="it" style="top:183px;letter-spacing:0.14px">repeatable</div>
<div class="it" style="top:209px;letter-spacing:0.17px">repeatable 10x per year/per level range</div>
<div class="it" style="top:235px;letter-spacing:0.07px">repeatable every 18 hours</div>
<div class="it" style="top:261px;letter-spacing:0.04px">repeatable once per year</div>
<div class="it" style="top:287px;letter-spacing:-0.1px">Volunteer Guide Quest, repeatable</div>
</div>
<div id="tb">
<svg width="520" height="58" style="left:1400px;top:0" viewBox="1400 0 520 58" fill="#1b7444" stroke="none"><path d="M1645 11C1680 10 1720 13 1760 19S1850 32 1920 22" fill="none" stroke="#1b7444" stroke-width="1.600"/><path d="M1700 13C1705 22 1700 30 1692 36M1745 17C1740 28 1738 34 1735 42M1790 24C1784 30 1776 33 1768 36M1850 29C1860 25 1870 18 1880 10" fill="none" stroke="#1b7444" stroke-width="1.200"/><path transform="translate(1621 7) rotate(35)" d="M-10.15 0Q0 -6.8 10.15 0Q0 6.8 -10.15 0Z"/><path transform="translate(1630 13) rotate(-20)" d="M-9.4 0Q0 -6.0 9.4 0Q0 6.0 -9.4 0Z"/><path transform="translate(1641 7) rotate(-50)" d="M-8.7 0Q0 -6.0 8.7 0Q0 6.0 -8.7 0Z"/><path transform="translate(1624 21) rotate(-30)" d="M-9.4 0Q0 -6.0 9.4 0Q0 6.0 -9.4 0Z"/><path transform="translate(1640 24) rotate(20)" d="M-8.7 0Q0 -5.7 8.7 0Q0 5.7 -8.7 0Z"/><path transform="translate(1652 27) rotate(60)" d="M-7.95 0Q0 -5.2 7.95 0Q0 5.2 -7.95 0Z"/><path transform="translate(1612 14) rotate(10)" d="M-7.25 0Q0 -4.8 7.25 0Q0 4.8 -7.25 0Z"/><path transform="translate(1696 22) rotate(-25)" d="M-11.6 0Q0 -7.5 11.6 0Q0 7.5 -11.6 0Z"/><path transform="translate(1690 34) rotate(-35)" d="M-10.9 0Q0 -7.5 10.9 0Q0 7.5 -10.9 0Z"/><path transform="translate(1707 33) rotate(65)" d="M-9.4 0Q0 -6.3 9.4 0Q0 6.3 -9.4 0Z"/><path transform="translate(1731 21) rotate(70)" d="M-10.9 0Q0 -7.5 10.9 0Q0 7.5 -10.9 0Z"/><path transform="translate(1724 12) rotate(-15)" d="M-10.15 0Q0 -6.8 10.15 0Q0 6.8 -10.15 0Z"/><path transform="translate(1736 40) rotate(-20)" d="M-9.4 0Q0 -6.0 9.4 0Q0 6.0 -9.4 0Z"/><path transform="translate(1710 3) rotate(15)" d="M-8.7 0Q0 -6.0 8.7 0Q0 6.0 -8.7 0Z"/><path transform="translate(1716 38) rotate(-10)" d="M-7.95 0Q0 -5.2 7.95 0Q0 5.2 -7.95 0Z"/><path transform="translate(1769 34) rotate(75)" d="M-9.4 0Q0 -6.3 9.4 0Q0 6.3 -9.4 0Z"/><path transform="translate(1779 5) rotate(-20)" d="M-9.4 0Q0 -6.3 9.4 0Q0 6.3 -9.4 0Z"/><path transform="translate(1795 10) rotate(30)" d="M-7.95 0Q0 -5.2 7.95 0Q0 5.2 -7.95 0Z"/><path transform="translate(1830 17) rotate(60)" d="M-10.15 0Q0 -6.8 10.15 0Q0 6.8 -10.15 0Z"/><path transform="translate(1838 28) rotate(-40)" d="M-8.7 0Q0 -6.0 8.7 0Q0 6.0 -8.7 0Z"/><path transform="translate(1856 6) rotate(-10)" d="M-8.7 0Q0 -6.0 8.7 0Q0 6.0 -8.7 0Z"/><path transform="translate(1873 26) rotate(-55)" d="M-10.15 0Q0 -6.8 10.15 0Q0 6.8 -10.15 0Z"/><path transform="translate(1882 10) rotate(-35)" d="M-10.15 0Q0 -6.8 10.15 0Q0 6.8 -10.15 0Z"/><path transform="translate(1911 7) rotate(-20)" d="M-9.4 0Q0 -6.3 9.4 0Q0 6.3 -9.4 0Z"/><path transform="translate(1900 30) rotate(40)" d="M-8.7 0Q0 -6.0 8.7 0Q0 6.0 -8.7 0Z"/><path transform="translate(1915 24) rotate(-30)" d="M-7.25 0Q0 -5.2 7.25 0Q0 5.2 -7.25 0Z"/><path transform="translate(1813 30) rotate(-15)" d="M-7.95 0Q0 -5.2 7.95 0Q0 5.2 -7.95 0Z"/><path transform="translate(1461 25) scale(-1.3 1.3)" d="M-7 1q3 -1 5 -1q1 -5 5 -8q0 4 -1 7q4 -1 7 1q-4 1 -6 2q0 5 -4 8q-1 -4 -1 -7q-3 0 -5 -2z"/><path transform="translate(1524 15) scale(1.4 1.4)" d="M-7 1q3 -1 5 -1q1 -5 5 -8q0 4 -1 7q4 -1 7 1q-4 1 -6 2q0 5 -4 8q-1 -4 -1 -7q-3 0 -5 -2z"/><path transform="translate(1540 36) scale(1.3 1.3)" d="M-7 1q3 -1 5 -1q1 -5 5 -8q0 4 -1 7q4 -1 7 1q-4 1 -6 2q0 5 -4 8q-1 -4 -1 -7q-3 0 -5 -2z"/><path transform="translate(1604 32) scale(-1.2 1.2)" d="M-7 1q3 -1 5 -1q1 -5 5 -8q0 4 -1 7q4 -1 7 1q-4 1 -6 2q0 5 -4 8q-1 -4 -1 -7q-3 0 -5 -2z"/></svg>
<svg width="320" height="34" style="left:0;top:0" viewBox="0 0 320 34" fill="none" stroke="#fff" stroke-width="1.6">
<path d="M21.8 10h12.4v12.4h-12.4z" stroke-width="2"/><path d="M25 10v4.5h6.5v-4.5M25.5 22v-4h5.5v4" stroke-width="1.6"/><rect x="24" y="10.5" width="8" height="3.5" fill="#fff" stroke="none"/><rect x="26.5" y="19" width="2" height="3" fill="#fff" stroke="none"/>
<rect x="68.8" y="9" width="10.8" height="14" rx="1" stroke-width="1.4"/><path d="M71 12h6.4" stroke-width="2"/><path d="M71 15.6h6.4M71 18.2h6.4M71 20.8h6.4" stroke-width="1.4" stroke-dasharray="1.4 1.1"/>
<circle cx="120" cy="16" r="7.6" stroke-width="1.2"/><path d="M116.5 21c2.5.5 3-1.5 3.4-5 .4-3.6 1-5.2 3.2-4.6M117.5 15h4.5M121 17l4 4.5M125 17l-4 4.500" stroke-width="1.1"/>
<path d="M158 14.600h7.500a4 4 0 0 1 0 8h-2.500" stroke-width="2"/><path d="M161.500 10l-4.500 4.600 4.500 4.600" stroke-width="2"/>
<path d="M178.500 14h6l-3 3.200z" fill="#fff" stroke="none"/>
<path d="M213 10v4h-4M213 14a5.500 5.500 0 1 0 1.500 5" stroke="#5fa079" stroke-width="1.800"/>
<g stroke="#4b9067" stroke-width="1.300"><rect x="250" y="10" width="8" height="12" rx="1"/><path d="M252 9h4v2.500h-4z"/><path d="M259 14v8M258 15l1-1M261.500 17.500c1-1.500 3-1 3 .5 0 1.500-3 2.500-3 4h3.500" stroke-width="1.100"/></g>
<path d="M298 12.500h7" stroke-width="1.300"/><path d="M298 15h7l-3.500 3.600z" fill="#fff" stroke="none"/>
</svg>
<span class="x" style="top:9px;line-height:18px;height:18px;letter-spacing:-0.23px;left:858.5px">Gulaep's Frostfell Checklist.xlsx - Excel</span>
<svg width="170" height="30" style="left:1745px;top:0" viewBox="0 0 170 30" fill="none" stroke="#fff" stroke-width="1">
<rect x="6.500" y="11.500" width="12" height="9"/><path d="M6.500 13.500h12" /><path d="M12.500 19v-4M10.500 16.500l2-2 2 2"/>
<path d="M54 16.500h10"/>
<rect x="100.500" y="11.500" width="9" height="9"/>
<path d="M146 11l10 10M156 11l-10 10" stroke-width="1.100"/>
</svg>
<div id="hometab"></div>
<span class="x" style="top:38px;line-height:18px;height:18px;letter-spacing:-0.11px;left:21.0px">File</span>
<span class="x" style="top:37px;line-height:18px;height:18px;color:#3c4a42;letter-spacing:0.49px;left:77.0px">Home</span>
<span class="x" style="top:38px;line-height:18px;height:18px;letter-spacing:-0.08px;left:139.0px">Insert</span>
<span class="x" style="top:38px;line-height:18px;height:18px;letter-spacing:-0.17px;left:197.0px">Page Layout</span>
<span class="x" style="top:38px;line-height:18px;height:18px;letter-spacing:-0.06px;left:291.0px">Formulas</span>
<span class="x" style="top:38px;line-height:18px;height:18px;letter-spacing:-0.32px;left:369.0px">Data</span>
<span class="x" style="top:38px;line-height:18px;height:18px;letter-spacing:-0.33px;left:422.0px">Review</span>
<span class="x" style="top:38px;line-height:18px;height:18px;letter-spacing:-0.03px;left:487.5px">View</span>
<svg width="12" height="16" style="left:541px;top:38px" viewBox="0 0 12 16" fill="none" stroke="#fff" stroke-width="1.100"><path d="M4 10.500c0-2-2.200-2.800-2.200-5.200a4.200 4.200 0 0 1 8.400 0c0 2.400-2.200 3.200-2.200 5.200z"/><path d="M4.200 12.500h3.600M4.600 14.500h2.800"/></svg>
<span class="x" style="top:38px;line-height:18px;height:18px;letter-spacing:0.07px;left:559.5px">Tell me what you want to do...</span>
<span class="x" style="top:37px;line-height:18px;height:18px;left:1792.5px">Mark K</span>
<div id="share"></div>
<svg width="16" height="16" style="left:1846px;top:37px" viewBox="0 0 16 16" fill="none" stroke="#fff" stroke-width="1.500"><circle cx="7.500" cy="5" r="3.600"/><path d="M1.500 15c.3-3.800 2.500-5.600 5.200-5.800"/><path d="M11.500 9.500v6M8.500 12.500h6" stroke-width="1.200"/></svg>
<span class="x" style="top:37px;line-height:18px;height:18px;letter-spacing:-0.51px;left:1865.5px">Share</span>
</div>
<div id="lb"></div><div id="rbd"></div>
<div id="rb"></div>
<div class="gs" style="left:158px"></div>
<div class="gs" style="left:365px"></div>
<div class="gs" style="left:629px"></div>
<div class="gs" style="left:769px"></div>
<div class="gs" style="left:1458px"></div>
<div class="gs" style="left:1594px"></div>
<div class="gs" style="left:1781px"></div>
<div class="ss" style="left:245px;top:100px"></div>
<div class="ss" style="left:288px;top:100px"></div>
<div class="ss" style="left:440px;top:69px"></div>
<div class="ss" style="left:440px;top:100px"></div>
<div class="ss" style="left:716px;top:100px"></div>
<div class="box" style="left:163px;top:69px;width:111px;height:23px"></div>
<div class="box" style="left:274px;top:69px;width:43px;height:23px"></div>
<div class="box" style="left:634px;top:69px;width:131px;height:23px"></div>
<div class="abs" style="left:414px;top:69px;width:22px;height:23px;background:#e3e3e3"></div>
<div class="box" style="left:904px;top:64px;width:533px;height:62px;border-color:#d4d4d4;background:#fff"></div>
<div class="box" style="left:1436px;top:64px;width:15px;height:62px;border-color:#dcdcdc;background:#fdfdfd"></div>
<div class="abs" style="left:1437px;top:85px;width:13px;height:1px;background:#dcdcdc"></div><div class="abs" style="left:1437px;top:104px;width:13px;height:1px;background:#dcdcdc"></div>
<div class="abs" style="left:905px;top:67px;width:106px;height:28px;background:#e3e3e3"></div>
<div class="sty" style="left:908px;top:70px;width:100px;letter-spacing:0.85px;background:#fff">Normal</div>
<div class="sty" style="left:1014px;top:70px;width:100px;letter-spacing:0.09px;background:#ffdfe4;color:#a01420">Bad</div>
<div class="sty" style="left:1120px;top:70px;width:100px;letter-spacing:1.17px;background:#e2fbe9;color:#0e6a1e">Good</div>
<div class="sty" style="left:1226px;top:70px;width:100px;letter-spacing:0.88px;background:#fffaa6;color:#a07a10">Neutral</div>
<div class="sty" style="left:1332px;top:70px;width:100px;letter-spacing:0.68px;background:#fbfbfb;color:#ee9a40;border:1px solid #7f7f7f;line-height:18px;padding-left:3px;font-weight:bold">Calculation</div>
<div class="sty" style="left:908px;top:98px;width:100px;letter-spacing:0.54px;background:#aaa;color:#fff;border:3px double #3f3f3f;line-height:15px;padding-left:1px;font-weight:bold;text-shadow:0 0 1px #fff">Check Cell</div>
<div class="sty" style="left:1014px;top:98px;width:100px;letter-spacing:1.13px;color:#8a8a8a;font-style:italic">Explanato...</div>
<div class="sty" style="left:1120px;top:98px;width:100px;letter-spacing:0.69px;background:#ffe2a8;color:#4a3a5a;border:1px solid #9a8a70;line-height:18px;padding-left:4px">Input</div>
<div class="sty" style="left:1226px;top:98px;width:100px;letter-spacing:0.82px;color:#d9b876;border-bottom:3px double #c8a850;height:22px;line-height:18px">Linked Cell</div>
<div class="sty" style="left:1332px;top:98px;width:100px;letter-spacing:1.45px;background:#fffde9;border:1px solid #c9c9bd;line-height:18px;padding-left:3px">Note</div>
<svg width="1920" height="94" style="left:0;top:58px" viewBox="0 58 1920 94" fill="none" stroke="#666" stroke-width="1">
<g stroke="#d6d6d6"><path d="M19.500 73.500v-2.500h4.500a2.500 2.500 0 0 1 5 0h4.500v2.500z" fill="#d9d9d9"/><path d="M28.500 77.500h8.500l5 5v13h-13.500z" fill="#fdfdfd"/><path d="M37 77.500v5h5"/></g>
<path d="M22.4 121.0h5.200l-2.600 3.200z" fill="#cfcfcf" stroke="none"/>
<g stroke="#5a5a5a" stroke-width="1.100"><path d="M54 65.500l7.500 10M62 65.500l-7.500 10"/><circle cx="53.500" cy="76.700" r="2"/><circle cx="62.500" cy="76.700" r="2"/></g>
<g stroke="#5a5a5a"><path d="M55.500 91.500v-3h-5v10.500h3.500"/><path d="M55.500 91.500h5.500l3.500 3.500v7h-9z" fill="#fff"/><path d="M57.500 96.500h5M57.500 98.500h5M57.500 100.500h5M52 91h2M52 93h2M52 95h2" stroke-width=".8"/></g>
<path d="M106.9 94.0h5.200l-2.600 3.200z" fill="#777" stroke="none"/>
<g stroke="none"><path d="M51.500 119.500l6.500 -4.500 3 4.500 -6 5z" fill="#f2c96b"/><path d="M57.500 115.500l3.500 -2.500 2.500 4 -3.500 2.500z" fill="#444"/><path d="M61.500 113.500l3.500 -2.500 1.500 2 -3.500 2.500z" fill="#666"/></g>
<path d="M147.5 144.5v-5h5M150.0 142.0l4 4M154.0 143.0v3h-3" fill="none" stroke="#777" stroke-width="1"/>
<path d="M263.4 79.0h5.200l-2.600 3.200z" fill="#777" stroke="none"/>
<path d="M306.4 79.0h5.200l-2.600 3.200z" fill="#777" stroke="none"/>
<path d="M331.500 76h4.500l-2.250 -3z" fill="#5b7fae" stroke="none"/><path d="M353 73.500h4.500l-2.250 3z" fill="#5b7fae" stroke="none"/>
<path d="M231.9 109.5h5.200l-2.600 3.200z" fill="#777" stroke="none"/>
<rect x="254" y="104" width="13.500" height="13.500" stroke="#6a6a6a" stroke-width="1.500"/><path d="M260.700 106.500v9M256.500 110.700h9" stroke="#888" stroke-width="1" stroke-dasharray="1 1"/>
<path d="M274.9 109.5h5.200l-2.600 3.200z" fill="#777" stroke="none"/>
<rect x="296" y="115" width="16" height="4.500" fill="#2bb5e6" stroke="none"/><path d="M299 108.500l5 -4.500 5 5 -5 4.500z" fill="#fff" stroke="#666" stroke-width="1"/><path d="M303.500 104v-2.500a1.500 1.500 0 0 1 3 0v4" stroke="#666" stroke-width=".9"/><path d="M309 108c1.500 1 2.500 2.500 2.500 4a1.200 1.200 0 0 1 -2.400 0c0 -1.300 .2 -2.500 -.1 -4z" fill="#5b8fc4" stroke="none"/>
<path d="M317.9 109.5h5.200l-2.600 3.200z" fill="#777" stroke="none"/>
<rect x="330" y="115" width="16" height="4.500" fill="#d21c1c" stroke="none"/>
<path d="M351.9 109.5h5.200l-2.600 3.200z" fill="#777" stroke="none"/>
<path d="M354.5 144.5v-5h5M357.0 142.0l4 4M361.0 143.0v3h-3" fill="none" stroke="#777" stroke-width="1"/>
<path d="M374 72.5H388" stroke="#666" stroke-width="1.2" fill="none"/>
<path d="M374 75.5H388" stroke="#666" stroke-width="1.2" fill="none"/>
<path d="M374 78.5H388" stroke="#666" stroke-width="1.2" fill="none"/>
<path d="M396 76.5H410" stroke="#666" stroke-width="1.2" fill="none"/>
<path d="M396 79.5H410" stroke="#666" stroke-width="1.2" fill="none"/>
<path d="M396 82.5H410" stroke="#666" stroke-width="1.2" fill="none"/>
<path d="M418 81.5H432" stroke="#666" stroke-width="1.2" fill="none"/>
<path d="M418 84.5H432" stroke="#666" stroke-width="1.2" fill="none"/>
<path d="M418 87.5H432" stroke="#666" stroke-width="1.2" fill="none"/>
<path d="M374 106.5H388" stroke="#666" stroke-width="1.2" fill="none"/>
<path d="M396 106.5H410" stroke="#666" stroke-width="1.2" fill="none"/>
<path d="M418 106.5H432" stroke="#666" stroke-width="1.2" fill="none"/>
<path d="M374 109.5H384" stroke="#666" stroke-width="1.2" fill="none"/>
<path d="M398.5 109.5H407.5" stroke="#666" stroke-width="1.2" fill="none"/>
<path d="M422 109.5H432" stroke="#666" stroke-width="1.2" fill="none"/>
<path d="M374 112.5H388" stroke="#666" stroke-width="1.2" fill="none"/>
<path d="M396 112.5H410" stroke="#666" stroke-width="1.2" fill="none"/>
<path d="M418 112.5H432" stroke="#666" stroke-width="1.2" fill="none"/>
<path d="M374 115.5H384" stroke="#666" stroke-width="1.2" fill="none"/>
<path d="M398.5 115.5H407.5" stroke="#666" stroke-width="1.2" fill="none"/>
<path d="M422 115.5H432" stroke="#666" stroke-width="1.2" fill="none"/>
<g stroke="#666" stroke-width="1.100"><path d="M454 87l9 -9.500M463 77.500h-3.500M463 77.500v3.500"/><circle cx="451.500" cy="81" r="2" transform="rotate(-40 451.500 81)"/><path d="M449 76.500l4 5.500M455 74.500l1.500 5a2 2 0 1 0 1 -3"/></g>
<path d="M467.4 79.0h5.200l-2.600 3.200z" fill="#777" stroke="none"/>
<path d="M448 104.5H464" stroke="#777" stroke-width="1" fill="none"/>
<path d="M455 108H464" stroke="#777" stroke-width="1" fill="none"/>
<path d="M455 111.5H464" stroke="#777" stroke-width="1" fill="none"/>
<path d="M455 115H464" stroke="#777" stroke-width="1" fill="none"/>
<path d="M448 118.5H464" stroke="#777" stroke-width="1" fill="none"/>
<path d="M470 104.5H486" stroke="#777" stroke-width="1" fill="none"/>
<path d="M477 108H486" stroke="#777" stroke-width="1" fill="none"/>
<path d="M477 111.5H486" stroke="#777" stroke-width="1" fill="none"/>
<path d="M477 115H486" stroke="#777" stroke-width="1" fill="none"/>
<path d="M470 118.5H486" stroke="#777" stroke-width="1" fill="none"/>
<path d="M448.500 111.500h6M451 109l-2.500 2.500 2.500 2.500" stroke="#3e78b4" stroke-width="1.400"/><path d="M470.500 111.500h6M474 109l2.500 2.500 -2.500 2.500" stroke="#3e78b4" stroke-width="1.400"/>
<g stroke="#6a6a6a"><rect x="501.500" y="72.500" width="9" height="3"/><rect x="501.500" y="78" width="13" height="3"/><rect x="501.500" y="83.500" width="9" height="3"/><path d="M516.500 75v6.500h-4M514.500 79.500l-2 2 2 2" stroke="#3e78b4"/></g>
<g stroke="#6a6a6a"><rect x="501.500" y="103.500" width="14" height="14"/><path d="M501.500 107.500h14M501.500 113.500h14M508.500 103.500v4M508.500 113.500v4"/><path d="M504 110.500h9M505.500 109l-1.500 1.500 1.500 1.500M511.500 109l1.500 1.500 -1.500 1.500" stroke-width=".9"/></g>
<path d="M614.9 109.5h5.200l-2.600 3.200z" fill="#777" stroke="none"/>
<path d="M618.5 144.5v-5h5M621.0 142.0l4 4M625.0 143.0v3h-3" fill="none" stroke="#777" stroke-width="1"/>
<path d="M754.4 79.0h5.200l-2.600 3.200z" fill="#777" stroke="none"/>
<path d="M658.9 109.5h5.200l-2.600 3.200z" fill="#777" stroke="none"/>
<path d="M724.500 107.500h5.500M726.500 105.500l-2 2 2 2M746.500 114.500h5.500M750 112.500l2 2 -2 2" stroke="#3e78b4" stroke-width="1.200"/>
<path d="M758.5 144.5v-5h5M761.0 142.0l4 4M765.0 143.0v3h-3" fill="none" stroke="#777" stroke-width="1"/>
<g><rect x="796.500" y="66.500" width="27" height="24" fill="#fff" stroke="#9a9a9a"/><path d="M803.500 66.500v24M810 66.500v24M816.500 66.500v24M796.500 72.500h27M796.500 78.500h27M796.500 84.500h27" stroke="#c6c6c6"/><rect x="804" y="67" width="5.500" height="5.500" fill="#e0674a" stroke="none"/><rect x="804" y="73" width="11" height="5.500" fill="#4d86c8" stroke="none"/><rect x="804" y="79" width="8" height="5.500" fill="#e0674a" stroke="none"/><rect x="804" y="85" width="4" height="5.500" fill="#4d86c8" stroke="none"/><rect x="810.500" y="83.500" width="15" height="12" fill="#fff" stroke="#777"/><path d="M814.500 88h7M814.500 91h7M820 85.500l-3.500 8" stroke="#444" stroke-width="1"/></g>
<path d="M837.9 122.0h5.200l-2.600 3.200z" fill="#777" stroke="none"/>
<path d="M886.9 122.0h5.200l-2.600 3.200z" fill="#777" stroke="none"/>
<g><rect x="861.500" y="68.500" width="24" height="20" fill="#fff" stroke="#9a9a9a"/><rect x="867.500" y="73.500" width="18" height="15" fill="#d6e8fa" stroke="none"/><path d="M867.500 68.500v20M873.500 68.500v20M879.500 68.500v20M861.500 73.500h24M861.500 78.500h24M861.500 83.500h24" stroke="#b8c4d0"/><path d="M884 82l6 -8.500" stroke="#7a7a7a" stroke-width="3"/><path d="M882 84c-3 0 -5 3 -4 7 -1 2 -3 3 -5 3.500 5 1.500 10 .5 12 -3.500 1 -3 -.5 -6 -3 -7z" fill="#4d86c8" stroke="none"/><circle cx="881.500" cy="86.500" r="2.500" fill="#e9eef4" stroke="none"/></g>
<path d="M1441 77.500h5l-2.500 -3z" fill="#d0d0d0" stroke="none"/>
<path d="M1440.9 93.5h5.200l-2.600 3.200z" fill="#777" stroke="none"/>
<path d="M1441 113.500h5" stroke="#777"/>
<path d="M1440.9 115.5h5.200l-2.600 3.200z" fill="#777" stroke="none"/>
<g stroke="#7a7a7a"><rect x="1471.500" y="66.500" width="13" height="4.500" fill="#fff"/><path d="M1478 66.500v4.500"/><rect x="1482.500" y="74.500" width="14" height="5" fill="#dce9f7"/><path d="M1489.500 74.500v5"/><rect x="1471.500" y="83.500" width="13" height="10" fill="#fff"/><path d="M1478 83.500v10M1471.500 88.500h13"/><path d="M1472 77h7M1475 74.500l-3 2.500 3 2.500" stroke="#3e78b4" stroke-width="1.400"/></g>
<path d="M1480.4 121.0h5.200l-2.600 3.200z" fill="#777" stroke="none"/>
<g stroke="#7a7a7a"><rect x="1512.500" y="66.500" width="13" height="4.500" fill="#fff"/><path d="M1519 66.500v4.500"/><rect x="1518.500" y="74.500" width="9" height="5" fill="#dce9f7"/><rect x="1512.500" y="83.500" width="13" height="10" fill="#fff"/><path d="M1519 83.500v10M1512.500 88.500h13"/><path d="M1528 72l12 12M1540 72l-12 12" stroke="#d26a45" stroke-width="1.500"/></g>
<path d="M1522.4 121.0h5.200l-2.600 3.200z" fill="#777" stroke="none"/>
<g stroke="#7a7a7a"><path d="M1554.500 65v5M1576.500 65v5M1556 67.500h19M1558 65.500l-2 2 2 2M1573 65.500l2 2 -2 2" stroke="#4a7a8c"/><path d="M1554.500 71.500h27v19.500h-10l-2 3.500h-6l-2 -3.500h-7z" fill="#fff"/><path d="M1561.500 71.500v19.500M1568.500 71.500v19.500M1575.500 71.500v19.500M1554.500 76.500h27M1554.500 85.500h27" stroke="#c4c4c4"/><rect x="1562" y="77" width="6" height="8.500" fill="#4d86c8" stroke="none"/></g>
<path d="M1565.4 121.0h5.200l-2.600 3.200z" fill="#777" stroke="none"/>
<path d="M1616.500 67v-2.200h-13.500l7 6.700 -7 6.700h13.500v-2.200" stroke="#444" stroke-width="1.600"/>
<path d="M1680.9 71.5h5.200l-2.600 3.200z" fill="#777" stroke="none"/>
<g><rect x="1603.500" y="87.500" width="13" height="15" fill="#fff" stroke="#8a8a8a"/><rect x="1603.500" y="87.500" width="13" height="3" fill="#7a7a7a" stroke="none"/><path d="M1610 92.500v7M1607 96.500l3 3 3 -3" stroke="#3e78b4" stroke-width="1.500"/></g>
<path d="M1638.9 94.5h5.200l-2.600 3.200z" fill="#777" stroke="none"/>
<g stroke="none"><path d="M1604.500 118l6.500 -6.500 5.500 4 -6 6.500h-3.500z" fill="#f07a92"/><path d="M1604.500 118l2.500 -2.500 5.500 4 -2 2.500h-3.500z" fill="#f8d2d8"/><path d="M1606 124h11" stroke="#888" stroke-width="1"/></g>
<path d="M1651.9 117.5h5.200l-2.600 3.200z" fill="#777" stroke="none"/>
<g stroke="none"><path d="M1709 74h17l-6.500 7.500v7.500l-4 -1.500v-6z" fill="#8a8a8a"/></g>
<path d="M1723.9 122.0h5.200l-2.600 3.200z" fill="#777" stroke="none"/>
<g><circle cx="1758" cy="75" r="7.500" stroke="#4d86c8" stroke-width="1.800" fill="#fff"/><path d="M1752.500 81l-8.500 9" stroke="#4d86c8" stroke-width="3.200" stroke-linecap="round"/></g>
<path d="M1769.9 122.0h5.200l-2.600 3.200z" fill="#777" stroke="none"/>
<path d="M1900 145l4.500 -4.500 4.500 4.500" stroke="#777" stroke-width="1.600"/>
</svg>
<span class="x" style="top:98px;line-height:18px;height:18px;color:#b8b8b8;letter-spacing:-0.55px;left:12.1px">Paste</span>
<span class="x" style="top:64px;line-height:18px;height:18px;color:#3b3b3b;letter-spacing:0.16px;left:69.1px">Cut</span>
<span class="x" style="top:87px;line-height:18px;height:18px;color:#3b3b3b;letter-spacing:-0.01px;left:69.1px">Copy</span>
<span class="x" style="top:110px;line-height:18px;height:18px;color:#3b3b3b;letter-spacing:-0.07px;left:69.1px">Format Painter</span>
<span class="x" style="top:133px;line-height:18px;height:18px;color:#666;letter-spacing:-0.11px;left:46.2px">Clipboard</span>
<span class="x" style="top:72px;line-height:18px;height:18px;color:#3b3b3b;letter-spacing:-0.08px;left:166.5px">Trebuchet MS</span>
<span class="x" style="top:72px;line-height:18px;height:18px;color:#3b3b3b;letter-spacing:-1.2px;left:277.5px">12</span>
<span class="x" style="top:72px;line-height:19px;height:19px;font-size:13px;color:#3b3b3b;left:323.5px">A</span>
<span class="x" style="top:74px;line-height:16.5px;height:16.5px;font-size:10.5px;color:#3b3b3b;left:346.0px">A</span>
<span class="x" style="top:101px;line-height:19px;height:19px;font-size:13px;font-weight:bold;color:#3b3b3b;left:169.0px">B</span>
<span class="x" style="top:101px;line-height:19px;height:19px;font-size:13px;font-weight:bold;font-style:italic;color:#3b3b3b;left:192.0px;font-family:Liberation Serif,serif">I</span>
<span class="x" style="top:101px;line-height:19px;height:19px;font-size:13px;font-weight:bold;color:#3b3b3b;left:212.5px;text-decoration:underline">U</span>
<span class="x" style="top:100px;line-height:18.5px;height:18.5px;font-size:12.5px;color:#3b3b3b;left:332.5px">A</span>
<span class="x" style="top:133px;line-height:18px;height:18px;color:#666;letter-spacing:0.16px;left:242.0px">Font</span>
<span class="x" style="top:72px;line-height:18px;height:18px;color:#3b3b3b;letter-spacing:-0.13px;left:520.0px">Wrap Text</span>
<span class="x" style="top:102px;line-height:18px;height:18px;color:#3b3b3b;letter-spacing:0.06px;left:520.0px">Merge &amp; Center</span>
<span class="x" style="top:133px;line-height:18px;height:18px;color:#666;letter-spacing:0.08px;left:462.5px">Alignment</span>
<span class="x" style="top:72px;line-height:18px;height:18px;color:#3b3b3b;letter-spacing:-0.53px;left:637.0px">General</span>
<span class="x" style="top:100px;line-height:21px;height:21px;font-size:15px;color:#3b3b3b;left:640.5px">$</span>
<span class="x" style="top:101px;line-height:21px;height:21px;font-size:15px;color:#3b3b3b;left:672.5px">%</span>
<span class="x" style="top:95px;line-height:24px;height:24px;font-size:18px;font-weight:bold;color:#3b3b3b;left:698.0px">,</span>
<span class="x" style="top:102px;line-height:10px;height:10px;font-size:8px;color:#3b3b3b;letter-spacing:0.83px;left:731.3px">.0</span>
<span class="x" style="top:109px;line-height:10px;height:10px;font-size:8px;color:#3b3b3b;letter-spacing:0.69px;left:726.0px">.00</span>
<span class="x" style="top:102px;line-height:10px;height:10px;font-size:8px;color:#3b3b3b;letter-spacing:0.69px;left:748.8px">.00</span>
<span class="x" style="top:109px;line-height:10px;height:10px;font-size:8px;color:#3b3b3b;letter-spacing:0.83px;left:753.5px">.0</span>
<span class="x" style="top:133px;line-height:18px;height:18px;color:#666;letter-spacing:-0.24px;left:671.0px">Number</span>
<span class="x" style="top:98px;line-height:18px;height:18px;color:#3b3b3b;letter-spacing:0.2px;left:779.0px">Conditional</span>
<span class="x" style="top:114px;line-height:18px;height:18px;color:#3b3b3b;letter-spacing:0.18px;left:775.5px">Formatting</span>
<span class="x" style="top:98px;line-height:18px;height:18px;color:#3b3b3b;letter-spacing:-0.13px;left:847.5px">Format as</span>
<span class="x" style="top:114px;line-height:18px;height:18px;color:#3b3b3b;letter-spacing:-0.17px;left:856.5px">Table</span>
<span class="x" style="top:133px;line-height:18px;height:18px;color:#666;letter-spacing:-0.74px;left:1099.0px">Styles</span>
<span class="x" style="top:98px;line-height:18px;height:18px;color:#3b3b3b;letter-spacing:-0.1px;left:1468.5px">Insert</span>
<span class="x" style="top:98px;line-height:18px;height:18px;color:#3b3b3b;letter-spacing:-0.14px;left:1509.0px">Delete</span>
<span class="x" style="top:98px;line-height:18px;height:18px;color:#3b3b3b;letter-spacing:0.2px;left:1548.5px">Format</span>
<span class="x" style="top:133px;line-height:18px;height:18px;color:#666;letter-spacing:-0.79px;left:1514.0px">Cells</span>
<span class="x" style="top:64px;line-height:18px;height:18px;color:#3b3b3b;letter-spacing:0.27px;left:1620.5px">AutoSum</span>
<span class="x" style="top:87px;line-height:18px;height:18px;color:#3b3b3b;letter-spacing:-0.11px;left:1620.5px">Fill</span>
<span class="x" style="top:110px;line-height:18px;height:18px;color:#3b3b3b;letter-spacing:-0.17px;left:1620.5px">Clear</span>
<span class="x" style="top:62px;line-height:21px;height:21px;font-size:15px;color:#3e78b4;left:1696.5px">A</span>
<span class="x" style="top:76px;line-height:21px;height:21px;font-size:15px;color:#8a5a9a;left:1697.0px">Z</span>
<span class="x" style="top:98px;line-height:18px;height:18px;color:#3b3b3b;letter-spacing:0.33px;left:1694.5px">Sort &amp;</span>
<span class="x" style="top:114px;line-height:18px;height:18px;color:#3b3b3b;letter-spacing:0.07px;left:1694.5px">Filter</span>
<span class="x" style="top:98px;line-height:18px;height:18px;color:#3b3b3b;letter-spacing:0.46px;left:1736.5px">Find &amp;</span>
<span class="x" style="top:114px;line-height:18px;height:18px;color:#3b3b3b;letter-spacing:-0.27px;left:1734.5px">Select</span>
<span class="x" style="top:133px;line-height:18px;height:18px;color:#666;letter-spacing:0.05px;left:1668.5px">Editing</span>
<div id="vs"></div>
<div class="sb" style="left:1901px;top:153px;width:15px;height:15px;border-color:#b8b8b8"></div>
<div class="sb" style="left:1901px;top:168px;width:15px;height:452px;border-color:#ababab"></div>
<div class="sb" style="left:1901px;top:974px;width:15px;height:15px;border-color:#dedede"></div>
<div class="abs" style="left:1897px;top:170px;width:1px;height:820px;background:#a6a6a6"></div>
<svg width="20" height="840" style="left:1898px;top:151px" viewBox="1898 151 20 840"><path d="M1905 162.500h7l-3.500 -4z M1905 980h7l-3.500 4z" fill="#777"/></svg>
<div id="tabs"></div>
<div id="st"></div>
<svg width="100" height="27" style="left:0;top:990px" viewBox="0 990 100 27"><path d="M32 998.500v8l-4 -4z M56.500 998.500v8l4 -4z" fill="#d0d0d0"/></svg>
<div class="tsep" style="left:101px"></div>
<div class="tab" style="left:104px;width:186px;background:#00c854;color:#064a20;letter-spacing:-0.1px;"><span style="position:absolute;left:15.0px;top:0">Gulaep's Frostfell Checklist</span></div>
<div class="abs" style="left:292px;top:990px;width:129px;height:24px;background:linear-gradient(#fff 40%,#ecd0f4);border:1px solid #ababab;border-top:0;border-bottom:2px solid #217346"></div>
<span class="x" style="top:993px;line-height:19px;height:19px;font-size:13px;color:#2c6a4c;letter-spacing:0.27px;left:304.0px;-webkit-text-stroke:.55px #2c6a4c">Sample Checklist</span>
<div class="tab" style="left:423px;width:74px;background:#8b2db5;color:#fff;letter-spacing:-0.28px;"><span style="position:absolute;left:11.2px;top:0">Checklist</span></div>
<div class="tsep" style="left:499px"></div>
<div class="tab" style="left:502px;width:110px;background:#0a79d3;color:#fff;letter-spacing:-0.09px;"><span style="position:absolute;left:10.0px;top:0">Quest Rewards</span></div>
<div class="tab" style="left:617px;width:155px;background:#02c0fc;color:#07387c;letter-spacing:0.09px;"><span style="position:absolute;left:11.5px;top:0">Santa Glug &amp; Vendors</span></div>
<div class="tsep" style="left:774px"></div><div class="tsep" style="left:614px;background:#c8c8c8"></div>
<svg width="1920" height="50" style="left:0;top:990px" viewBox="0 990 1920 50" fill="none" stroke="#777"><circle cx="815.500" cy="1003" r="7.500" stroke-width="1.200"/><path d="M811.500 1003h8M815.500 999v8" stroke-width="1.300"/><path d="M1152.500 996v2M1152.500 1002v2M1152.500 1008v2" stroke="#b0b0b0" stroke-width="1.500"/><rect x="1169.500" y="996.500" width="14" height="14" stroke="#ababab" fill="#fff"/><rect x="1183.500" y="996.500" width="529" height="14" stroke="#ababab" fill="#fff"/><rect x="1881.500" y="996.500" width="14" height="14" stroke="#ababab" fill="#fff"/><path d="M1178.500 1000v7l-4 -3.500z M1886.500 1000v7l4 -3.500z" fill="#666" stroke="none"/><rect x="1617" y="1018" width="37" height="22" fill="#e6e6e6" stroke="none"/><g stroke="#666"><rect x="1628.500" y="1021.500" width="12" height="12"/><path d="M1632.500 1021.500v12M1636.500 1021.500v12M1628.500 1025.500h12M1628.500 1029.500h12"/><rect x="1667.500" y="1021.500" width="12" height="12"/><rect x="1670.500" y="1024.500" width="6" height="7"/><path d="M1672 1026.500h3M1672 1028.500h3"/><path d="M1704.500 1021.500h13v12h-13zM1704.500 1029.500h4v-8M1713.500 1021.500v5h-5"/></g><path d="M1735 1027.500h6M1849.500 1027.500h7.500M1853.250 1023.800v7.500" stroke="#555" stroke-width="1.800"/><path d="M1745 1027.500h100" stroke="#a6a6a6"/><path d="M1795.500 1024v7" stroke="#b0b0b0"/><rect x="1783" y="1021.500" width="4" height="12" fill="#666" stroke="none"/></svg>
<span class="x" style="top:1019px;line-height:18px;height:18px;color:#555;letter-spacing:-0.92px;left:8.2px">Ready</span>
<span class="x" style="top:1019px;line-height:18px;height:18px;color:#555;letter-spacing:-1.2px;left:1872.0px">80%</span>
<div id="tkl"></div>
<div id="tk">
<div id="srch"></div>
<div id="act"></div>
<div class="ul" style="left:789px;width:152px"></div><div class="ul" style="left:950px;width:152px"></div><div class="ul" style="left:1106px;width:160px"></div>
<svg width="1920" height="40" style="left:0;top:0" viewBox="0 1040 1920 40" fill="none">
<g fill="#fff"><path d="M16 1053.900l6.300 -.900v6.300h-6.300zM23.100 1052.900l9 -1.300v7.700h-9zM16 1060.100h6.300v6.300l-6.300 -.900zM23.100 1060.100h9v7.700l-9 -1.300z"/></g>
<circle cx="67.500" cy="1060.500" r="8.700" stroke="#fff" stroke-width="2.600"/>
<g stroke="#c3cfdb" stroke-width="1.200"><rect x="368.500" y="1052.500" width="5" height="10" rx="2.500"/><path d="M366 1059.500v1.500a5 5 0 0 0 10 0v-1.500M371 1066.500v2.500M368.500 1069.500h5"/></g>
<g stroke="#fff" stroke-width="1.500"><rect x="411" y="1054.500" width="10" height="11"/><path d="M408.500 1056h-2v8h2M423.500 1056h2v8h-2"/></g>
<g><path d="M456 1058l4 -2 2 3 4 1 -1 5 -5 1 -4 -3z" fill="#3d7fd0"/><circle cx="467" cy="1054.500" r="3.200" fill="#e8eaf0"/><path d="M464.500 1057.500h5l1.500 8h-8z" fill="#dfe3ea"/><path d="M462 1065.500h10v3h-10z" fill="#c8ccd4"/><circle cx="472" cy="1060" r="3" fill="#5a4a4a"/></g>
<g><ellipse cx="513" cy="1055.500" rx="8.500" ry="6" fill="#f3eef0" stroke="#c0392b" stroke-width="1.200"/><path d="M510 1052l9 14M520 1052l-9 14" stroke="#e8e8ee" stroke-width="1.600"/><circle cx="511" cy="1068" r="2.200" stroke="#4aa3e0" stroke-width="1.300"/><circle cx="520" cy="1068" r="2.200" stroke="#4aa3e0" stroke-width="1.300"/><path d="M506 1060c3 2 8 2 12 0" stroke="#b03a2e" stroke-width="1.500"/></g>
<g><path d="M553.500 1052h8l2 2h11.500v16h-21.500z" fill="#f7d56a"/><path d="M553.500 1056h21.500v12h-21.500z" fill="#fbe38a"/><path d="M558 1063h12v7h-12z" fill="#39b8ea"/><path d="M561 1066h6v4h-6z" fill="#f7e9a0"/></g>
<g><path d="M606 1050.500l12 2 3 16 -15 2 -4 -5z" fill="#dff0e6" stroke="#9fb8a8" stroke-width=".8"/><path d="M606 1051l11 2 -1 12 -13 1z" fill="#6cc1a0"/><path d="M604 1066l14 -1 3 4 -14 1.500z" fill="#f4f4ea"/></g>
<text x="606" y="1062" font-family="Liberation Sans,sans-serif" font-size="6" font-weight="bold" fill="#0a6a3a" transform="rotate(-70 611 1060)">XML</text>
<g><path d="M655 1050.500l12 2 3 16 -15 2 -4 -5z" fill="#e8f2f8" stroke="#a8b8c4" stroke-width=".8"/><path d="M655 1051l11 2 -1 12 -13 1z" fill="#8fd0ee"/><path d="M653 1066l14 -1 3 4 -14 1.500z" fill="#f4f4f4"/></g>
<g><rect x="700.500" y="1049.500" width="21" height="21" fill="#0a2a5a" stroke="#fff" stroke-width="1.200"/><path d="M700.500 1070.500v-7l6 -8 5 6 3 -3.500 7 8v4.500z" fill="#fff"/></g>
<text x="751" y="1070" font-family="Liberation Sans,sans-serif" font-size="32" font-weight="bold" fill="#2fb4f2">e</text>
<path d="M749.500 1066.500c-3.500 6 2.500 6.500 9 2M770 1056c2 -4 1 -7 -3 -6.500 -3 .5 -6 2 -9 4" stroke="#f4c531" stroke-width="1.800" fill="none"/>
<g><circle cx="807.500" cy="1060" r="10.500" fill="#e4601a"/><circle cx="809" cy="1057.500" r="7" fill="#2a58a8"/><path d="M797.200 1057c.5 -4 3.500 -7.500 8 -8 -1.500 2 -1.500 3.500 .5 4.500 3 1 5 1.500 5.500 3.500 -2.500 -.5 -4.500 .5 -4.500 2.500 2 2.500 6.500 1.500 8.500 -1.500 1.500 6.500 -3 12.500 -9.500 12.500 -6 0 -9.500 -6 -8.500 -13.500z" fill="#f59a22"/><path d="M799 1052c2.500 -3.500 8 -4.500 12.500 -2" stroke="#f8c640" stroke-width="1.400" fill="none"/></g>
<g><path d="M966 1050.500h12.500v19h-12.500z" fill="#fff"/><path d="M970.5 1053.500h6.500M970.5 1056.500h6.500M970.5 1059.500h6.500M970.5 1062.500h6.500M970.5 1065.500h6.500" stroke="#2e8555" stroke-width="1.600"/><path d="M974 1052v15" stroke="#fff" stroke-width="1"/><path d="M956 1051.500l13.500 -2.500v22l-13.500 -2.500z" fill="#1e7a45"/><path d="M960 1055.500l5.500 9M965.5 1055.500l-5.500 9" stroke="#fff" stroke-width="1.900"/></g>
<g><path d="M1126 1050.500h12.500v19h-12.500z" fill="#fff"/><path d="M1130.5 1053.500h6.500M1130.5 1056.500h6.500M1130.5 1059.500h6.500M1130.5 1062.500h6.500M1130.5 1065.500h6.500" stroke="#2e8555" stroke-width="1.600"/><path d="M1134 1052v15" stroke="#fff" stroke-width="1"/><path d="M1116 1051.500l13.500 -2.500v22l-13.500 -2.500z" fill="#1e7a45"/><path d="M1120 1055.500l5.500 9M1125.5 1055.500l-5.500 9" stroke="#fff" stroke-width="1.900"/></g>
<g><rect x="1279" y="1048" width="24" height="24" rx="4" fill="#5560c8" stroke="#b8c4f0" stroke-width="1"/><rect x="1281" y="1050" width="20" height="20" rx="3" fill="#2a3490"/></g>
<text x="1281" y="1066" font-family="Liberation Serif,serif" font-size="14" font-weight="bold" fill="#f0d070" stroke="#fff" stroke-width=".3" textLength="20">EqII</text>
<g fill="#c9a24a" stroke="#3a2a10" stroke-width=".6"><path d="M1339 1048l2.500 9.500 9.500 2.500 -9.500 2.500 -2.500 9.500 -2.500 -9.500 -9.500 -2.500 9.500 -2.500z"/><path d="M1331 1052l6 5 -5 -6zM1347 1052l-6 5 5 -6zM1331 1068l6 -5 -5 6zM1347 1068l-6 -5 5 6z" fill="#8a6a2a"/><circle cx="1339" cy="1060" r="2.200" fill="#2a1a08"/></g>
<g><rect x="1378" y="1049" width="23" height="22" fill="#1a0a0a"/><rect x="1379" y="1052" width="21" height="17" fill="#4a0c0c"/></g>
<text x="1379" y="1066" font-family="Liberation Serif,serif" font-size="14" font-weight="bold" font-style="italic" fill="#e06a3a" stroke="#f0c0a0" stroke-width=".3" textLength="21">EQ!</text>
<g><rect x="1426" y="1048" width="24" height="24" fill="#0f76d6"/><circle cx="1438" cy="1060" r="3.800" fill="#fff"/><path d="M1438 1052v3M1438 1065v3M1430 1060h3M1443 1060h3M1432.300 1054.300l2.200 2.200M1441.500 1063.500l2.200 2.200M1432.300 1065.700l2.200 -2.200M1441.500 1056.500l2.200 -2.200" stroke="#fff" stroke-width="1.400"/></g>
<g stroke="#fff" stroke-width="1.300"><path d="M1732 1062.500l5.500 -5.500 5.500 5.500"/><path d="M1760.500 1053v14M1753.500 1060h14M1758.500 1055l2 -2 2 2M1758.500 1065l2 2 2 -2M1755.500 1058l-2 2 2 2M1765.500 1058l2 2 -2 2" stroke-width="1.100"/></g>
<path d="M1780 1065a3.500 3.500 0 0 1 .5 -7 5 5 0 0 1 9.500 -1.500 4.300 4.300 0 0 1 1 8.500z" fill="#fff"/>
<g stroke="#fff" stroke-width="1.100"><path d="M1802.500 1057.500h2.500l3.500 -3.500v12l-3.500 -3.500h-2.500z"/><path d="M1811 1057a4 4 0 0 1 0 6M1813.500 1055a7 7 0 0 1 0 10M1816 1053a10 10 0 0 1 0 14" stroke-width="1"/></g>
<g><path d="M1825.500 1053.500h14v11h-8l-3 3v-3h-3z" fill="#fff"/><path d="M1828 1056.500h9M1828 1059h9M1828 1061.500h5" stroke="#0a3a8a" stroke-width="1"/><circle cx="1837" cy="1066" r="3.300" fill="#04398a" stroke="#fff" stroke-width="1"/><path d="M1835 1066h4" stroke="#fff" stroke-width="1"/></g>
<path d="M1915.500 1040v40" stroke="#5a7ab0" stroke-width="1"/>
</svg>
<span class="x" style="top:10px;line-height:21px;height:21px;font-size:15px;color:#c9d3de;letter-spacing:-0.17px;left:88.2px">Ask me anything</span>
<span class="x" style="top:11px;line-height:18px;height:18px;color:#fff;letter-spacing:0.04px;left:822.5px">Add or subtract to ...</span>
<span class="x" style="top:11px;line-height:18px;height:18px;color:#fff;letter-spacing:-0.4px;left:983.5px">EQ2 Characters v2.x...</span>
<span class="x" style="top:11px;line-height:18px;height:18px;color:#fff;letter-spacing:-0.18px;left:1143.2px">Gulaep's Frostfell C...</span>
<span class="x" style="top:2px;line-height:18px;height:18px;color:#fff;letter-spacing:-0.17px;left:1858.5px">5:40 AM</span>
<span class="x" style="top:18px;line-height:18px;height:18px;color:#fff;letter-spacing:-0.17px;left:1851.5px">12/12/2015</span>
</div>
</div></body></html>
